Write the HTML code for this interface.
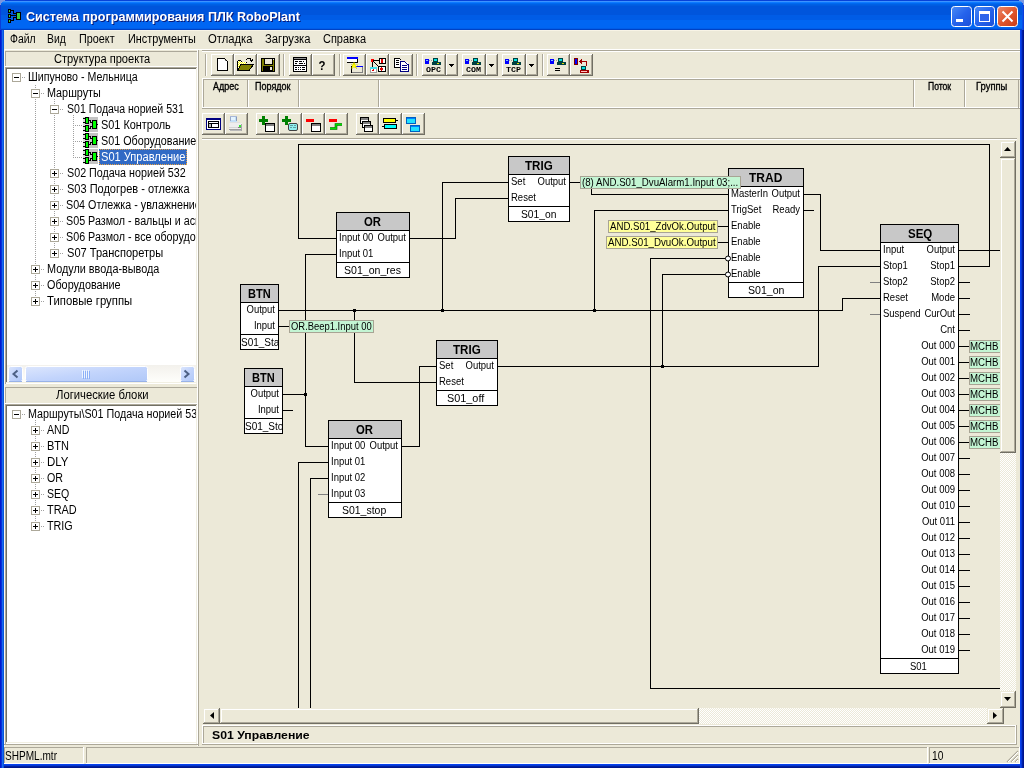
<!DOCTYPE html>
<html><head><meta charset="utf-8"><style>
html,body{margin:0;padding:0;}
body{width:1024px;height:768px;overflow:hidden;background:#ECE9D8;position:relative;font-family:"Liberation Sans",sans-serif;}
div{position:absolute;box-sizing:border-box;}
svg{position:absolute;left:0;top:0;will-change:transform;}
svg text{font-family:"Liberation Sans",sans-serif;}
</style></head><body>

<svg width="1024" height="768" viewBox="0 0 1024 768" shape-rendering="crispEdges">
<rect x="0" y="0" width="1024" height="1" fill="#0842D8"/>
<rect x="0" y="1" width="1024" height="1" fill="#3C93FF"/>
<rect x="0" y="2" width="1024" height="1" fill="#0D79FF"/>
<rect x="0" y="3" width="1024" height="1" fill="#0069F0"/>
<rect x="0" y="4" width="1024" height="1" fill="#0060E5"/>
<rect x="0" y="5" width="1024" height="1" fill="#005CE0"/>
<rect x="0" y="6" width="1024" height="1" fill="#0055DC"/>
<rect x="0" y="7" width="1024" height="1" fill="#0055DC"/>
<rect x="0" y="8" width="1024" height="1" fill="#0055DC"/>
<rect x="0" y="9" width="1024" height="1" fill="#0055DC"/>
<rect x="0" y="10" width="1024" height="1" fill="#0055DC"/>
<rect x="0" y="11" width="1024" height="1" fill="#0055DC"/>
<rect x="0" y="12" width="1024" height="1" fill="#0055DC"/>
<rect x="0" y="13" width="1024" height="1" fill="#0055DC"/>
<rect x="0" y="14" width="1024" height="1" fill="#0055DC"/>
<rect x="0" y="15" width="1024" height="1" fill="#005CE6"/>
<rect x="0" y="16" width="1024" height="1" fill="#005CE6"/>
<rect x="0" y="17" width="1024" height="1" fill="#005CE6"/>
<rect x="0" y="18" width="1024" height="1" fill="#005CE6"/>
<rect x="0" y="19" width="1024" height="1" fill="#005CE6"/>
<rect x="0" y="20" width="1024" height="1" fill="#0066F3"/>
<rect x="0" y="21" width="1024" height="1" fill="#0066F3"/>
<rect x="0" y="22" width="1024" height="1" fill="#0066F3"/>
<rect x="0" y="23" width="1024" height="1" fill="#0066F3"/>
<rect x="0" y="24" width="1024" height="1" fill="#0066F3"/>
<rect x="0" y="25" width="1024" height="1" fill="#0066F3"/>
<rect x="0" y="26" width="1024" height="1" fill="#0066F3"/>
<rect x="0" y="27" width="1024" height="1" fill="#0066F3"/>
<rect x="0" y="28" width="1024" height="1" fill="#005DE8"/>
<rect x="0" y="29" width="1024" height="1" fill="#0042C4"/>
<rect x="0" y="5" width="1" height="25" fill="#0A3ED8"/>
<rect x="1023" y="5" width="1" height="25" fill="#0A3ED8"/>
<rect x="1022" y="3" width="1" height="27" fill="#0750E8"/>
<rect x="0" y="0" width="1" height="1" fill="#7A96DF"/>
<rect x="1023" y="0" width="1" height="1" fill="#7A96DF"/>
<rect x="1" y="0" width="1" height="1" fill="#7A96DF"/>
<rect x="1022" y="0" width="1" height="1" fill="#7A96DF"/>
<rect x="2" y="0" width="1" height="1" fill="#7A96DF"/>
<rect x="1021" y="0" width="1" height="1" fill="#7A96DF"/>
<rect x="3" y="0" width="1" height="1" fill="#7A96DF"/>
<rect x="1020" y="0" width="1" height="1" fill="#7A96DF"/>
<rect x="4" y="0" width="1" height="1" fill="#7A96DF"/>
<rect x="1019" y="0" width="1" height="1" fill="#7A96DF"/>
<rect x="0" y="1" width="1" height="1" fill="#7A96DF"/>
<rect x="1023" y="1" width="1" height="1" fill="#7A96DF"/>
<rect x="1" y="1" width="1" height="1" fill="#7A96DF"/>
<rect x="1022" y="1" width="1" height="1" fill="#7A96DF"/>
<rect x="2" y="1" width="1" height="1" fill="#7A96DF"/>
<rect x="1021" y="1" width="1" height="1" fill="#7A96DF"/>
<rect x="0" y="2" width="1" height="1" fill="#7A96DF"/>
<rect x="1023" y="2" width="1" height="1" fill="#7A96DF"/>
<rect x="1" y="2" width="1" height="1" fill="#7A96DF"/>
<rect x="1022" y="2" width="1" height="1" fill="#7A96DF"/>
<rect x="0" y="3" width="1" height="1" fill="#7A96DF"/>
<rect x="1023" y="3" width="1" height="1" fill="#7A96DF"/>
<rect x="0" y="4" width="1" height="1" fill="#7A96DF"/>
<rect x="1023" y="4" width="1" height="1" fill="#7A96DF"/>
<rect x="0" y="30" width="1" height="738" fill="#0019CF"/>
<rect x="1" y="30" width="1" height="738" fill="#0831D9"/>
<rect x="2" y="30" width="1" height="738" fill="#166AEE"/>
<rect x="3" y="30" width="1" height="738" fill="#0855DD"/>
<rect x="1020" y="30" width="1" height="738" fill="#0842EE"/>
<rect x="1021" y="30" width="1" height="738" fill="#0536D6"/>
<rect x="1022" y="30" width="1" height="738" fill="#001EA6"/>
<rect x="1023" y="30" width="1" height="738" fill="#00148A"/>
<rect x="4" y="764" width="1016" height="1" fill="#0842EE"/>
<rect x="4" y="765" width="1016" height="1" fill="#0538D2"/>
<rect x="4" y="766" width="1016" height="1" fill="#0020A2"/>
<rect x="4" y="767" width="1016" height="1" fill="#00168A"/>
<rect x="8" y="9" width="3" height="4" fill="#000"/><rect x="9" y="10" width="1" height="2" fill="#3CC83C"/><rect x="8" y="14" width="3" height="4" fill="#000"/><rect x="9" y="15" width="1" height="2" fill="#3CC83C"/><rect x="8" y="19" width="3" height="4" fill="#000"/><rect x="9" y="20" width="1" height="2" fill="#3CC83C"/><rect x="16" y="12" width="5" height="8" fill="#000"/><rect x="17" y="13" width="3" height="6" fill="#40D040"/><rect x="11" y="10" width="3" height="1" fill="#000"/><rect x="13" y="10" width="1" height="4" fill="#000"/><rect x="13" y="13" width="3" height="1" fill="#000"/><rect x="11" y="15" width="5" height="1" fill="#000"/><rect x="11" y="20" width="3" height="1" fill="#000"/><rect x="13" y="17" width="1" height="4" fill="#000"/><rect x="13" y="17" width="3" height="1" fill="#000"/>
<text x="27" y="22" font-size="13" font-weight="bold" fill="#0A1874" textLength="274" lengthAdjust="spacingAndGlyphs">Система программирования ПЛК RoboPlant</text>
<text x="26" y="21" font-size="13" font-weight="bold" fill="#fff" textLength="274" lengthAdjust="spacingAndGlyphs">Система программирования ПЛК RoboPlant</text>
<defs>
<linearGradient id="gbtn" x1="0" y1="0" x2="1" y2="1"><stop offset="0" stop-color="#4B8BF6"/><stop offset="0.5" stop-color="#2563EC"/><stop offset="1" stop-color="#1B4FD8"/></linearGradient>
<linearGradient id="gclose" x1="0" y1="0" x2="1" y2="1"><stop offset="0" stop-color="#EA8A6C"/><stop offset="0.5" stop-color="#E1582F"/><stop offset="1" stop-color="#C73A15"/></linearGradient>
</defs>
<rect x="951.5" y="6.5" width="20" height="20" rx="3" ry="3" fill="url(#gbtn)" stroke="#fff" stroke-width="1" shape-rendering="geometricPrecision"/>
<rect x="956" y="19" width="7" height="3" fill="#fff"/>
<rect x="974.5" y="6.5" width="20" height="20" rx="3" ry="3" fill="url(#gbtn)" stroke="#fff" stroke-width="1" shape-rendering="geometricPrecision"/>
<rect x="979" y="11" width="11" height="11" fill="#fff"/><rect x="980" y="14" width="9" height="7" fill="#2E64EA"/>
<rect x="997.5" y="6.5" width="20" height="20" rx="3" ry="3" fill="url(#gclose)" stroke="#fff" stroke-width="1" shape-rendering="geometricPrecision"/>
<path d="M1002.5 11.5 L1012.5 21.5 M1012.5 11.5 L1002.5 21.5" stroke="#fff" stroke-width="2" shape-rendering="geometricPrecision"/>
<rect x="4" y="30" width="1016" height="1" fill="#F8F4E6"/>
<text x="10.0" y="43" font-size="12" fill="#000" textLength="25.57" lengthAdjust="spacingAndGlyphs">Файл</text>
<text x="47.0" y="43" font-size="12" fill="#000" textLength="18.74" lengthAdjust="spacingAndGlyphs">Вид</text>
<text x="79.0" y="43" font-size="12" fill="#000" textLength="35.58" lengthAdjust="spacingAndGlyphs">Проект</text>
<text x="128.0" y="43" font-size="12" fill="#000" textLength="67.83" lengthAdjust="spacingAndGlyphs">Инструменты</text>
<text x="208.0" y="43" font-size="12" fill="#000" textLength="44.46" lengthAdjust="spacingAndGlyphs">Отладка</text>
<text x="265.0" y="43" font-size="12" fill="#000" textLength="45.55" lengthAdjust="spacingAndGlyphs">Загрузка</text>
<text x="323.0" y="43" font-size="12" fill="#000" textLength="43.07" lengthAdjust="spacingAndGlyphs">Справка</text>
<rect x="4" y="49" width="1016" height="1" fill="#fff"/>
<rect x="4" y="49" width="1" height="715" fill="#FBF8EE"/>
<rect x="197" y="49" width="1" height="697" fill="#fff"/>
<rect x="198" y="50" width="1" height="696" fill="#ACA899"/>
<rect x="5" y="51" width="192" height="16" fill="#ECE9D8" stroke="none" stroke-width="1"/>
<rect x="5" y="51" width="192" height="1" fill="#ACA899"/>
<rect x="5" y="51" width="1" height="15" fill="#ACA899"/>
<rect x="5" y="66" width="192" height="1" fill="#fff"/>
<text x="54.0" y="63" font-size="12" fill="#000" textLength="96.26" lengthAdjust="spacingAndGlyphs">Структура проекта</text>
<rect x="5" y="67" width="192" height="317" fill="#fff" stroke="none" stroke-width="1"/>
<rect x="5" y="67" width="192" height="1" fill="#ACA899"/>
<rect x="5" y="67" width="1" height="317" fill="#ACA899"/>
<rect x="6" y="68" width="190" height="1" fill="#716F64"/>
<rect x="6" y="68" width="1" height="315" fill="#716F64"/>
<rect x="6" y="382" width="191" height="1" fill="#F1EFE2"/>
<rect x="196" y="68" width="1" height="316" fill="#F1EFE2"/>
<rect x="5" y="387" width="192" height="17" fill="#ECE9D8" stroke="none" stroke-width="1"/>
<rect x="5" y="387" width="192" height="1" fill="#ACA899"/>
<rect x="5" y="387" width="1" height="16" fill="#ACA899"/>
<rect x="5" y="403" width="192" height="1" fill="#fff"/>
<text x="56.0" y="399" font-size="12" fill="#000" textLength="92.63" lengthAdjust="spacingAndGlyphs">Логические блоки</text>
<rect x="5" y="404" width="192" height="340" fill="#fff" stroke="none" stroke-width="1"/>
<rect x="5" y="404" width="192" height="1" fill="#ACA899"/>
<rect x="5" y="404" width="1" height="340" fill="#ACA899"/>
<rect x="6" y="405" width="190" height="1" fill="#716F64"/>
<rect x="6" y="405" width="1" height="338" fill="#716F64"/>
<rect x="6" y="742" width="191" height="1" fill="#F1EFE2"/>
<rect x="196" y="405" width="1" height="339" fill="#F1EFE2"/>
<rect x="4" y="744" width="194" height="1" fill="#ACA899"/>
<defs><linearGradient id="gtb" x1="0" y1="0" x2="1" y2="1"><stop offset="0" stop-color="#fff"/><stop offset="1" stop-color="#D8D4C4"/></linearGradient></defs>
<defs><clipPath id="clipT1"><rect x="7" y="69" width="189" height="296"/></clipPath><clipPath id="clipT2"><rect x="7" y="406" width="189" height="337"/></clipPath></defs>
<rect x="35" y="85" width="1" height="1" fill="#A0A0A0"/>
<rect x="35" y="87" width="1" height="1" fill="#A0A0A0"/>
<rect x="35" y="89" width="1" height="1" fill="#A0A0A0"/>
<rect x="35" y="91" width="1" height="1" fill="#A0A0A0"/>
<rect x="35" y="93" width="1" height="1" fill="#A0A0A0"/>
<rect x="35" y="95" width="1" height="1" fill="#A0A0A0"/>
<rect x="35" y="97" width="1" height="1" fill="#A0A0A0"/>
<rect x="35" y="99" width="1" height="1" fill="#A0A0A0"/>
<rect x="35" y="101" width="1" height="1" fill="#A0A0A0"/>
<rect x="35" y="103" width="1" height="1" fill="#A0A0A0"/>
<rect x="35" y="105" width="1" height="1" fill="#A0A0A0"/>
<rect x="35" y="107" width="1" height="1" fill="#A0A0A0"/>
<rect x="35" y="109" width="1" height="1" fill="#A0A0A0"/>
<rect x="35" y="111" width="1" height="1" fill="#A0A0A0"/>
<rect x="35" y="113" width="1" height="1" fill="#A0A0A0"/>
<rect x="35" y="115" width="1" height="1" fill="#A0A0A0"/>
<rect x="35" y="117" width="1" height="1" fill="#A0A0A0"/>
<rect x="35" y="119" width="1" height="1" fill="#A0A0A0"/>
<rect x="35" y="121" width="1" height="1" fill="#A0A0A0"/>
<rect x="35" y="123" width="1" height="1" fill="#A0A0A0"/>
<rect x="35" y="125" width="1" height="1" fill="#A0A0A0"/>
<rect x="35" y="127" width="1" height="1" fill="#A0A0A0"/>
<rect x="35" y="129" width="1" height="1" fill="#A0A0A0"/>
<rect x="35" y="131" width="1" height="1" fill="#A0A0A0"/>
<rect x="35" y="133" width="1" height="1" fill="#A0A0A0"/>
<rect x="35" y="135" width="1" height="1" fill="#A0A0A0"/>
<rect x="35" y="137" width="1" height="1" fill="#A0A0A0"/>
<rect x="35" y="139" width="1" height="1" fill="#A0A0A0"/>
<rect x="35" y="141" width="1" height="1" fill="#A0A0A0"/>
<rect x="35" y="143" width="1" height="1" fill="#A0A0A0"/>
<rect x="35" y="145" width="1" height="1" fill="#A0A0A0"/>
<rect x="35" y="147" width="1" height="1" fill="#A0A0A0"/>
<rect x="35" y="149" width="1" height="1" fill="#A0A0A0"/>
<rect x="35" y="151" width="1" height="1" fill="#A0A0A0"/>
<rect x="35" y="153" width="1" height="1" fill="#A0A0A0"/>
<rect x="35" y="155" width="1" height="1" fill="#A0A0A0"/>
<rect x="35" y="157" width="1" height="1" fill="#A0A0A0"/>
<rect x="35" y="159" width="1" height="1" fill="#A0A0A0"/>
<rect x="35" y="161" width="1" height="1" fill="#A0A0A0"/>
<rect x="35" y="163" width="1" height="1" fill="#A0A0A0"/>
<rect x="35" y="165" width="1" height="1" fill="#A0A0A0"/>
<rect x="35" y="167" width="1" height="1" fill="#A0A0A0"/>
<rect x="35" y="169" width="1" height="1" fill="#A0A0A0"/>
<rect x="35" y="171" width="1" height="1" fill="#A0A0A0"/>
<rect x="35" y="173" width="1" height="1" fill="#A0A0A0"/>
<rect x="35" y="175" width="1" height="1" fill="#A0A0A0"/>
<rect x="35" y="177" width="1" height="1" fill="#A0A0A0"/>
<rect x="35" y="179" width="1" height="1" fill="#A0A0A0"/>
<rect x="35" y="181" width="1" height="1" fill="#A0A0A0"/>
<rect x="35" y="183" width="1" height="1" fill="#A0A0A0"/>
<rect x="35" y="185" width="1" height="1" fill="#A0A0A0"/>
<rect x="35" y="187" width="1" height="1" fill="#A0A0A0"/>
<rect x="35" y="189" width="1" height="1" fill="#A0A0A0"/>
<rect x="35" y="191" width="1" height="1" fill="#A0A0A0"/>
<rect x="35" y="193" width="1" height="1" fill="#A0A0A0"/>
<rect x="35" y="195" width="1" height="1" fill="#A0A0A0"/>
<rect x="35" y="197" width="1" height="1" fill="#A0A0A0"/>
<rect x="35" y="199" width="1" height="1" fill="#A0A0A0"/>
<rect x="35" y="201" width="1" height="1" fill="#A0A0A0"/>
<rect x="35" y="203" width="1" height="1" fill="#A0A0A0"/>
<rect x="35" y="205" width="1" height="1" fill="#A0A0A0"/>
<rect x="35" y="207" width="1" height="1" fill="#A0A0A0"/>
<rect x="35" y="209" width="1" height="1" fill="#A0A0A0"/>
<rect x="35" y="211" width="1" height="1" fill="#A0A0A0"/>
<rect x="35" y="213" width="1" height="1" fill="#A0A0A0"/>
<rect x="35" y="215" width="1" height="1" fill="#A0A0A0"/>
<rect x="35" y="217" width="1" height="1" fill="#A0A0A0"/>
<rect x="35" y="219" width="1" height="1" fill="#A0A0A0"/>
<rect x="35" y="221" width="1" height="1" fill="#A0A0A0"/>
<rect x="35" y="223" width="1" height="1" fill="#A0A0A0"/>
<rect x="35" y="225" width="1" height="1" fill="#A0A0A0"/>
<rect x="35" y="227" width="1" height="1" fill="#A0A0A0"/>
<rect x="35" y="229" width="1" height="1" fill="#A0A0A0"/>
<rect x="35" y="231" width="1" height="1" fill="#A0A0A0"/>
<rect x="35" y="233" width="1" height="1" fill="#A0A0A0"/>
<rect x="35" y="235" width="1" height="1" fill="#A0A0A0"/>
<rect x="35" y="237" width="1" height="1" fill="#A0A0A0"/>
<rect x="35" y="239" width="1" height="1" fill="#A0A0A0"/>
<rect x="35" y="241" width="1" height="1" fill="#A0A0A0"/>
<rect x="35" y="243" width="1" height="1" fill="#A0A0A0"/>
<rect x="35" y="245" width="1" height="1" fill="#A0A0A0"/>
<rect x="35" y="247" width="1" height="1" fill="#A0A0A0"/>
<rect x="35" y="249" width="1" height="1" fill="#A0A0A0"/>
<rect x="35" y="251" width="1" height="1" fill="#A0A0A0"/>
<rect x="35" y="253" width="1" height="1" fill="#A0A0A0"/>
<rect x="35" y="255" width="1" height="1" fill="#A0A0A0"/>
<rect x="35" y="257" width="1" height="1" fill="#A0A0A0"/>
<rect x="35" y="259" width="1" height="1" fill="#A0A0A0"/>
<rect x="35" y="261" width="1" height="1" fill="#A0A0A0"/>
<rect x="35" y="263" width="1" height="1" fill="#A0A0A0"/>
<rect x="35" y="265" width="1" height="1" fill="#A0A0A0"/>
<rect x="35" y="267" width="1" height="1" fill="#A0A0A0"/>
<rect x="35" y="269" width="1" height="1" fill="#A0A0A0"/>
<rect x="35" y="271" width="1" height="1" fill="#A0A0A0"/>
<rect x="35" y="273" width="1" height="1" fill="#A0A0A0"/>
<rect x="35" y="275" width="1" height="1" fill="#A0A0A0"/>
<rect x="35" y="277" width="1" height="1" fill="#A0A0A0"/>
<rect x="35" y="279" width="1" height="1" fill="#A0A0A0"/>
<rect x="35" y="281" width="1" height="1" fill="#A0A0A0"/>
<rect x="35" y="283" width="1" height="1" fill="#A0A0A0"/>
<rect x="35" y="285" width="1" height="1" fill="#A0A0A0"/>
<rect x="35" y="287" width="1" height="1" fill="#A0A0A0"/>
<rect x="35" y="289" width="1" height="1" fill="#A0A0A0"/>
<rect x="35" y="291" width="1" height="1" fill="#A0A0A0"/>
<rect x="35" y="293" width="1" height="1" fill="#A0A0A0"/>
<rect x="35" y="295" width="1" height="1" fill="#A0A0A0"/>
<rect x="35" y="297" width="1" height="1" fill="#A0A0A0"/>
<rect x="35" y="299" width="1" height="1" fill="#A0A0A0"/>
<rect x="35" y="301" width="1" height="1" fill="#A0A0A0"/>
<rect x="54" y="99" width="1" height="1" fill="#A0A0A0"/>
<rect x="54" y="101" width="1" height="1" fill="#A0A0A0"/>
<rect x="54" y="103" width="1" height="1" fill="#A0A0A0"/>
<rect x="54" y="105" width="1" height="1" fill="#A0A0A0"/>
<rect x="54" y="107" width="1" height="1" fill="#A0A0A0"/>
<rect x="54" y="109" width="1" height="1" fill="#A0A0A0"/>
<rect x="54" y="111" width="1" height="1" fill="#A0A0A0"/>
<rect x="54" y="113" width="1" height="1" fill="#A0A0A0"/>
<rect x="54" y="115" width="1" height="1" fill="#A0A0A0"/>
<rect x="54" y="117" width="1" height="1" fill="#A0A0A0"/>
<rect x="54" y="119" width="1" height="1" fill="#A0A0A0"/>
<rect x="54" y="121" width="1" height="1" fill="#A0A0A0"/>
<rect x="54" y="123" width="1" height="1" fill="#A0A0A0"/>
<rect x="54" y="125" width="1" height="1" fill="#A0A0A0"/>
<rect x="54" y="127" width="1" height="1" fill="#A0A0A0"/>
<rect x="54" y="129" width="1" height="1" fill="#A0A0A0"/>
<rect x="54" y="131" width="1" height="1" fill="#A0A0A0"/>
<rect x="54" y="133" width="1" height="1" fill="#A0A0A0"/>
<rect x="54" y="135" width="1" height="1" fill="#A0A0A0"/>
<rect x="54" y="137" width="1" height="1" fill="#A0A0A0"/>
<rect x="54" y="139" width="1" height="1" fill="#A0A0A0"/>
<rect x="54" y="141" width="1" height="1" fill="#A0A0A0"/>
<rect x="54" y="143" width="1" height="1" fill="#A0A0A0"/>
<rect x="54" y="145" width="1" height="1" fill="#A0A0A0"/>
<rect x="54" y="147" width="1" height="1" fill="#A0A0A0"/>
<rect x="54" y="149" width="1" height="1" fill="#A0A0A0"/>
<rect x="54" y="151" width="1" height="1" fill="#A0A0A0"/>
<rect x="54" y="153" width="1" height="1" fill="#A0A0A0"/>
<rect x="54" y="155" width="1" height="1" fill="#A0A0A0"/>
<rect x="54" y="157" width="1" height="1" fill="#A0A0A0"/>
<rect x="54" y="159" width="1" height="1" fill="#A0A0A0"/>
<rect x="54" y="161" width="1" height="1" fill="#A0A0A0"/>
<rect x="54" y="163" width="1" height="1" fill="#A0A0A0"/>
<rect x="54" y="165" width="1" height="1" fill="#A0A0A0"/>
<rect x="54" y="167" width="1" height="1" fill="#A0A0A0"/>
<rect x="54" y="169" width="1" height="1" fill="#A0A0A0"/>
<rect x="54" y="171" width="1" height="1" fill="#A0A0A0"/>
<rect x="54" y="173" width="1" height="1" fill="#A0A0A0"/>
<rect x="54" y="175" width="1" height="1" fill="#A0A0A0"/>
<rect x="54" y="177" width="1" height="1" fill="#A0A0A0"/>
<rect x="54" y="179" width="1" height="1" fill="#A0A0A0"/>
<rect x="54" y="181" width="1" height="1" fill="#A0A0A0"/>
<rect x="54" y="183" width="1" height="1" fill="#A0A0A0"/>
<rect x="54" y="185" width="1" height="1" fill="#A0A0A0"/>
<rect x="54" y="187" width="1" height="1" fill="#A0A0A0"/>
<rect x="54" y="189" width="1" height="1" fill="#A0A0A0"/>
<rect x="54" y="191" width="1" height="1" fill="#A0A0A0"/>
<rect x="54" y="193" width="1" height="1" fill="#A0A0A0"/>
<rect x="54" y="195" width="1" height="1" fill="#A0A0A0"/>
<rect x="54" y="197" width="1" height="1" fill="#A0A0A0"/>
<rect x="54" y="199" width="1" height="1" fill="#A0A0A0"/>
<rect x="54" y="201" width="1" height="1" fill="#A0A0A0"/>
<rect x="54" y="203" width="1" height="1" fill="#A0A0A0"/>
<rect x="54" y="205" width="1" height="1" fill="#A0A0A0"/>
<rect x="54" y="207" width="1" height="1" fill="#A0A0A0"/>
<rect x="54" y="209" width="1" height="1" fill="#A0A0A0"/>
<rect x="54" y="211" width="1" height="1" fill="#A0A0A0"/>
<rect x="54" y="213" width="1" height="1" fill="#A0A0A0"/>
<rect x="54" y="215" width="1" height="1" fill="#A0A0A0"/>
<rect x="54" y="217" width="1" height="1" fill="#A0A0A0"/>
<rect x="54" y="219" width="1" height="1" fill="#A0A0A0"/>
<rect x="54" y="221" width="1" height="1" fill="#A0A0A0"/>
<rect x="54" y="223" width="1" height="1" fill="#A0A0A0"/>
<rect x="54" y="225" width="1" height="1" fill="#A0A0A0"/>
<rect x="54" y="227" width="1" height="1" fill="#A0A0A0"/>
<rect x="54" y="229" width="1" height="1" fill="#A0A0A0"/>
<rect x="54" y="231" width="1" height="1" fill="#A0A0A0"/>
<rect x="54" y="233" width="1" height="1" fill="#A0A0A0"/>
<rect x="54" y="235" width="1" height="1" fill="#A0A0A0"/>
<rect x="54" y="237" width="1" height="1" fill="#A0A0A0"/>
<rect x="54" y="239" width="1" height="1" fill="#A0A0A0"/>
<rect x="54" y="241" width="1" height="1" fill="#A0A0A0"/>
<rect x="54" y="243" width="1" height="1" fill="#A0A0A0"/>
<rect x="54" y="245" width="1" height="1" fill="#A0A0A0"/>
<rect x="54" y="247" width="1" height="1" fill="#A0A0A0"/>
<rect x="54" y="249" width="1" height="1" fill="#A0A0A0"/>
<rect x="54" y="251" width="1" height="1" fill="#A0A0A0"/>
<rect x="54" y="253" width="1" height="1" fill="#A0A0A0"/>
<rect x="73" y="115" width="1" height="1" fill="#A0A0A0"/>
<rect x="73" y="117" width="1" height="1" fill="#A0A0A0"/>
<rect x="73" y="119" width="1" height="1" fill="#A0A0A0"/>
<rect x="73" y="121" width="1" height="1" fill="#A0A0A0"/>
<rect x="73" y="123" width="1" height="1" fill="#A0A0A0"/>
<rect x="73" y="125" width="1" height="1" fill="#A0A0A0"/>
<rect x="73" y="127" width="1" height="1" fill="#A0A0A0"/>
<rect x="73" y="129" width="1" height="1" fill="#A0A0A0"/>
<rect x="73" y="131" width="1" height="1" fill="#A0A0A0"/>
<rect x="73" y="133" width="1" height="1" fill="#A0A0A0"/>
<rect x="73" y="135" width="1" height="1" fill="#A0A0A0"/>
<rect x="73" y="137" width="1" height="1" fill="#A0A0A0"/>
<rect x="73" y="139" width="1" height="1" fill="#A0A0A0"/>
<rect x="73" y="141" width="1" height="1" fill="#A0A0A0"/>
<rect x="73" y="143" width="1" height="1" fill="#A0A0A0"/>
<rect x="73" y="145" width="1" height="1" fill="#A0A0A0"/>
<rect x="73" y="147" width="1" height="1" fill="#A0A0A0"/>
<rect x="73" y="149" width="1" height="1" fill="#A0A0A0"/>
<rect x="73" y="151" width="1" height="1" fill="#A0A0A0"/>
<rect x="73" y="153" width="1" height="1" fill="#A0A0A0"/>
<rect x="73" y="155" width="1" height="1" fill="#A0A0A0"/>
<rect x="73" y="157" width="1" height="1" fill="#A0A0A0"/>
<g clip-path="url(#clipT1)">
<rect x="12" y="73" width="9" height="9" fill="#fff"/>
<rect x="12" y="73" width="9" height="1" fill="#ACA899"/>
<rect x="12" y="81" width="9" height="1" fill="#ACA899"/>
<rect x="12" y="73" width="1" height="9" fill="#ACA899"/>
<rect x="20" y="73" width="1" height="9" fill="#ACA899"/>
<rect x="14" y="77" width="5" height="1" fill="#000"/>
<rect x="22" y="77" width="1" height="1" fill="#A0A0A0"/>
<rect x="24" y="77" width="1" height="1" fill="#A0A0A0"/>
<text x="28.0" y="81" font-size="12" fill="#000" textLength="109.65" lengthAdjust="spacingAndGlyphs">Шипуново - Мельница</text>
<rect x="31" y="89" width="9" height="9" fill="#fff"/>
<rect x="31" y="89" width="9" height="1" fill="#ACA899"/>
<rect x="31" y="97" width="9" height="1" fill="#ACA899"/>
<rect x="31" y="89" width="1" height="9" fill="#ACA899"/>
<rect x="39" y="89" width="1" height="9" fill="#ACA899"/>
<rect x="33" y="93" width="5" height="1" fill="#000"/>
<rect x="41" y="93" width="1" height="1" fill="#A0A0A0"/>
<rect x="43" y="93" width="1" height="1" fill="#A0A0A0"/>
<text x="47.0" y="97" font-size="12" fill="#000" textLength="53.79" lengthAdjust="spacingAndGlyphs">Маршруты</text>
<rect x="50" y="105" width="9" height="9" fill="#fff"/>
<rect x="50" y="105" width="9" height="1" fill="#ACA899"/>
<rect x="50" y="113" width="9" height="1" fill="#ACA899"/>
<rect x="50" y="105" width="1" height="9" fill="#ACA899"/>
<rect x="58" y="105" width="1" height="9" fill="#ACA899"/>
<rect x="52" y="109" width="5" height="1" fill="#000"/>
<rect x="60" y="109" width="1" height="1" fill="#A0A0A0"/>
<rect x="62" y="109" width="1" height="1" fill="#A0A0A0"/>
<text x="67.0" y="113" font-size="12" fill="#000" textLength="116.78" lengthAdjust="spacingAndGlyphs">S01 Подача норией 531</text>
<rect x="75" y="125" width="1" height="1" fill="#A0A0A0"/>
<rect x="77" y="125" width="1" height="1" fill="#A0A0A0"/>
<rect x="79" y="125" width="1" height="1" fill="#A0A0A0"/>
<rect x="81" y="125" width="1" height="1" fill="#A0A0A0"/>
<rect x="83" y="117" width="15" height="15" fill="#C4C4C4"/><rect x="83" y="117" width="5" height="15" fill="#DCDCDC"/><rect x="85" y="117" width="4" height="7" fill="#000"/><rect x="86" y="118" width="2" height="5" fill="#00FF00"/><rect x="85" y="125" width="4" height="7" fill="#000"/><rect x="86" y="126" width="2" height="5" fill="#00FF00"/><rect x="92" y="120" width="5" height="9" fill="#000"/><rect x="93" y="121" width="3" height="7" fill="#00FF00"/><rect x="83" y="118" width="2" height="1" fill="#000"/><rect x="83" y="122" width="2" height="1" fill="#000"/><rect x="83" y="126" width="2" height="1" fill="#000"/><rect x="83" y="130" width="2" height="1" fill="#000"/><rect x="89" y="120" width="2" height="1" fill="#000"/><rect x="90" y="120" width="1" height="3" fill="#000"/><rect x="90" y="122" width="2" height="1" fill="#000"/><rect x="89" y="128" width="2" height="1" fill="#000"/><rect x="90" y="126" width="1" height="3" fill="#000"/><rect x="90" y="126" width="2" height="1" fill="#000"/><rect x="97" y="124" width="1" height="1" fill="#000"/>
<text x="101.0" y="129" font-size="12" fill="#000" textLength="69.8" lengthAdjust="spacingAndGlyphs">S01 Контроль</text>
<rect x="75" y="141" width="1" height="1" fill="#A0A0A0"/>
<rect x="77" y="141" width="1" height="1" fill="#A0A0A0"/>
<rect x="79" y="141" width="1" height="1" fill="#A0A0A0"/>
<rect x="81" y="141" width="1" height="1" fill="#A0A0A0"/>
<rect x="83" y="133" width="15" height="15" fill="#C4C4C4"/><rect x="83" y="133" width="5" height="15" fill="#DCDCDC"/><rect x="85" y="133" width="4" height="7" fill="#000"/><rect x="86" y="134" width="2" height="5" fill="#00FF00"/><rect x="85" y="141" width="4" height="7" fill="#000"/><rect x="86" y="142" width="2" height="5" fill="#00FF00"/><rect x="92" y="136" width="5" height="9" fill="#000"/><rect x="93" y="137" width="3" height="7" fill="#00FF00"/><rect x="83" y="134" width="2" height="1" fill="#000"/><rect x="83" y="138" width="2" height="1" fill="#000"/><rect x="83" y="142" width="2" height="1" fill="#000"/><rect x="83" y="146" width="2" height="1" fill="#000"/><rect x="89" y="136" width="2" height="1" fill="#000"/><rect x="90" y="136" width="1" height="3" fill="#000"/><rect x="90" y="138" width="2" height="1" fill="#000"/><rect x="89" y="144" width="2" height="1" fill="#000"/><rect x="90" y="142" width="1" height="3" fill="#000"/><rect x="90" y="142" width="2" height="1" fill="#000"/><rect x="97" y="140" width="1" height="1" fill="#000"/>
<text x="101.0" y="145" font-size="12" fill="#000" textLength="95.34" lengthAdjust="spacingAndGlyphs">S01 Оборудование</text>
<rect x="75" y="157" width="1" height="1" fill="#A0A0A0"/>
<rect x="77" y="157" width="1" height="1" fill="#A0A0A0"/>
<rect x="79" y="157" width="1" height="1" fill="#A0A0A0"/>
<rect x="81" y="157" width="1" height="1" fill="#A0A0A0"/>
<rect x="83" y="149" width="15" height="15" fill="#C4C4C4"/><rect x="83" y="149" width="5" height="15" fill="#DCDCDC"/><rect x="85" y="149" width="4" height="7" fill="#000"/><rect x="86" y="150" width="2" height="5" fill="#00FF00"/><rect x="85" y="157" width="4" height="7" fill="#000"/><rect x="86" y="158" width="2" height="5" fill="#00FF00"/><rect x="92" y="152" width="5" height="9" fill="#000"/><rect x="93" y="153" width="3" height="7" fill="#00FF00"/><rect x="83" y="150" width="2" height="1" fill="#000"/><rect x="83" y="154" width="2" height="1" fill="#000"/><rect x="83" y="158" width="2" height="1" fill="#000"/><rect x="83" y="162" width="2" height="1" fill="#000"/><rect x="89" y="152" width="2" height="1" fill="#000"/><rect x="90" y="152" width="1" height="3" fill="#000"/><rect x="90" y="154" width="2" height="1" fill="#000"/><rect x="89" y="160" width="2" height="1" fill="#000"/><rect x="90" y="158" width="1" height="3" fill="#000"/><rect x="90" y="158" width="2" height="1" fill="#000"/><rect x="97" y="156" width="1" height="1" fill="#000"/>
<rect x="99" y="149" width="88" height="16" fill="#316AC5"/><rect x="99.5" y="149.5" width="87" height="15" fill="none" stroke="#E8A040" stroke-width="1" stroke-dasharray="1 1" shape-rendering="crispEdges"/>
<text x="101.0" y="161" font-size="12" fill="#fff" textLength="84.42" lengthAdjust="spacingAndGlyphs">S01 Управление</text>
<rect x="50" y="169" width="9" height="9" fill="#fff"/>
<rect x="50" y="169" width="9" height="1" fill="#ACA899"/>
<rect x="50" y="177" width="9" height="1" fill="#ACA899"/>
<rect x="50" y="169" width="1" height="9" fill="#ACA899"/>
<rect x="58" y="169" width="1" height="9" fill="#ACA899"/>
<rect x="52" y="173" width="5" height="1" fill="#000"/>
<rect x="54" y="171" width="1" height="5" fill="#000"/>
<rect x="60" y="173" width="1" height="1" fill="#A0A0A0"/>
<rect x="62" y="173" width="1" height="1" fill="#A0A0A0"/>
<text x="67.0" y="177" font-size="12" fill="#000" textLength="118.78" lengthAdjust="spacingAndGlyphs">S02 Подача норией 532</text>
<rect x="50" y="185" width="9" height="9" fill="#fff"/>
<rect x="50" y="185" width="9" height="1" fill="#ACA899"/>
<rect x="50" y="193" width="9" height="1" fill="#ACA899"/>
<rect x="50" y="185" width="1" height="9" fill="#ACA899"/>
<rect x="58" y="185" width="1" height="9" fill="#ACA899"/>
<rect x="52" y="189" width="5" height="1" fill="#000"/>
<rect x="54" y="187" width="1" height="5" fill="#000"/>
<rect x="60" y="189" width="1" height="1" fill="#A0A0A0"/>
<rect x="62" y="189" width="1" height="1" fill="#A0A0A0"/>
<text x="67.0" y="193" font-size="12" fill="#000" textLength="122.56" lengthAdjust="spacingAndGlyphs">S03 Подогрев - отлежка</text>
<rect x="50" y="201" width="9" height="9" fill="#fff"/>
<rect x="50" y="201" width="9" height="1" fill="#ACA899"/>
<rect x="50" y="209" width="9" height="1" fill="#ACA899"/>
<rect x="50" y="201" width="1" height="9" fill="#ACA899"/>
<rect x="58" y="201" width="1" height="9" fill="#ACA899"/>
<rect x="52" y="205" width="5" height="1" fill="#000"/>
<rect x="54" y="203" width="1" height="5" fill="#000"/>
<rect x="60" y="205" width="1" height="1" fill="#A0A0A0"/>
<rect x="62" y="205" width="1" height="1" fill="#A0A0A0"/>
<text x="66" y="209" font-size="12" fill="#000" textLength="134.8" lengthAdjust="spacingAndGlyphs">S04 Отлежка - увлажнение</text>
<rect x="50" y="217" width="9" height="9" fill="#fff"/>
<rect x="50" y="217" width="9" height="1" fill="#ACA899"/>
<rect x="50" y="225" width="9" height="1" fill="#ACA899"/>
<rect x="50" y="217" width="1" height="9" fill="#ACA899"/>
<rect x="58" y="217" width="1" height="9" fill="#ACA899"/>
<rect x="52" y="221" width="5" height="1" fill="#000"/>
<rect x="54" y="219" width="1" height="5" fill="#000"/>
<rect x="60" y="221" width="1" height="1" fill="#A0A0A0"/>
<rect x="62" y="221" width="1" height="1" fill="#A0A0A0"/>
<text x="66" y="225" font-size="12" fill="#000" textLength="170.8" lengthAdjust="spacingAndGlyphs">S05 Размол - вальцы и аспирация</text>
<rect x="50" y="233" width="9" height="9" fill="#fff"/>
<rect x="50" y="233" width="9" height="1" fill="#ACA899"/>
<rect x="50" y="241" width="9" height="1" fill="#ACA899"/>
<rect x="50" y="233" width="1" height="9" fill="#ACA899"/>
<rect x="58" y="233" width="1" height="9" fill="#ACA899"/>
<rect x="52" y="237" width="5" height="1" fill="#000"/>
<rect x="54" y="235" width="1" height="5" fill="#000"/>
<rect x="60" y="237" width="1" height="1" fill="#A0A0A0"/>
<rect x="62" y="237" width="1" height="1" fill="#A0A0A0"/>
<text x="66" y="241" font-size="12" fill="#000" textLength="159.1" lengthAdjust="spacingAndGlyphs">S06 Размол - все оборудование</text>
<rect x="50" y="249" width="9" height="9" fill="#fff"/>
<rect x="50" y="249" width="9" height="1" fill="#ACA899"/>
<rect x="50" y="257" width="9" height="1" fill="#ACA899"/>
<rect x="50" y="249" width="1" height="9" fill="#ACA899"/>
<rect x="58" y="249" width="1" height="9" fill="#ACA899"/>
<rect x="52" y="253" width="5" height="1" fill="#000"/>
<rect x="54" y="251" width="1" height="5" fill="#000"/>
<rect x="60" y="253" width="1" height="1" fill="#A0A0A0"/>
<rect x="62" y="253" width="1" height="1" fill="#A0A0A0"/>
<text x="67.0" y="257" font-size="12" fill="#000" textLength="96.2" lengthAdjust="spacingAndGlyphs">S07 Транспоретры</text>
<rect x="31" y="265" width="9" height="9" fill="#fff"/>
<rect x="31" y="265" width="9" height="1" fill="#ACA899"/>
<rect x="31" y="273" width="9" height="1" fill="#ACA899"/>
<rect x="31" y="265" width="1" height="9" fill="#ACA899"/>
<rect x="39" y="265" width="1" height="9" fill="#ACA899"/>
<rect x="33" y="269" width="5" height="1" fill="#000"/>
<rect x="35" y="267" width="1" height="5" fill="#000"/>
<rect x="41" y="269" width="1" height="1" fill="#A0A0A0"/>
<rect x="43" y="269" width="1" height="1" fill="#A0A0A0"/>
<text x="47.0" y="273" font-size="12" fill="#000" textLength="112.38" lengthAdjust="spacingAndGlyphs">Модули ввода-вывода</text>
<rect x="31" y="281" width="9" height="9" fill="#fff"/>
<rect x="31" y="281" width="9" height="1" fill="#ACA899"/>
<rect x="31" y="289" width="9" height="1" fill="#ACA899"/>
<rect x="31" y="281" width="1" height="9" fill="#ACA899"/>
<rect x="39" y="281" width="1" height="9" fill="#ACA899"/>
<rect x="33" y="285" width="5" height="1" fill="#000"/>
<rect x="35" y="283" width="1" height="5" fill="#000"/>
<rect x="41" y="285" width="1" height="1" fill="#A0A0A0"/>
<rect x="43" y="285" width="1" height="1" fill="#A0A0A0"/>
<text x="47.0" y="289" font-size="12" fill="#000" textLength="73.63" lengthAdjust="spacingAndGlyphs">Оборудование</text>
<rect x="31" y="297" width="9" height="9" fill="#fff"/>
<rect x="31" y="297" width="9" height="1" fill="#ACA899"/>
<rect x="31" y="305" width="9" height="1" fill="#ACA899"/>
<rect x="31" y="297" width="1" height="9" fill="#ACA899"/>
<rect x="39" y="297" width="1" height="9" fill="#ACA899"/>
<rect x="33" y="301" width="5" height="1" fill="#000"/>
<rect x="35" y="299" width="1" height="5" fill="#000"/>
<rect x="41" y="301" width="1" height="1" fill="#A0A0A0"/>
<rect x="43" y="301" width="1" height="1" fill="#A0A0A0"/>
<text x="47.0" y="305" font-size="12" fill="#000" textLength="85.19" lengthAdjust="spacingAndGlyphs">Типовые группы</text>
</g>
<rect x="35" y="420" width="1" height="1" fill="#A0A0A0"/>
<rect x="35" y="422" width="1" height="1" fill="#A0A0A0"/>
<rect x="35" y="424" width="1" height="1" fill="#A0A0A0"/>
<rect x="35" y="426" width="1" height="1" fill="#A0A0A0"/>
<rect x="35" y="428" width="1" height="1" fill="#A0A0A0"/>
<rect x="35" y="430" width="1" height="1" fill="#A0A0A0"/>
<rect x="35" y="432" width="1" height="1" fill="#A0A0A0"/>
<rect x="35" y="434" width="1" height="1" fill="#A0A0A0"/>
<rect x="35" y="436" width="1" height="1" fill="#A0A0A0"/>
<rect x="35" y="438" width="1" height="1" fill="#A0A0A0"/>
<rect x="35" y="440" width="1" height="1" fill="#A0A0A0"/>
<rect x="35" y="442" width="1" height="1" fill="#A0A0A0"/>
<rect x="35" y="444" width="1" height="1" fill="#A0A0A0"/>
<rect x="35" y="446" width="1" height="1" fill="#A0A0A0"/>
<rect x="35" y="448" width="1" height="1" fill="#A0A0A0"/>
<rect x="35" y="450" width="1" height="1" fill="#A0A0A0"/>
<rect x="35" y="452" width="1" height="1" fill="#A0A0A0"/>
<rect x="35" y="454" width="1" height="1" fill="#A0A0A0"/>
<rect x="35" y="456" width="1" height="1" fill="#A0A0A0"/>
<rect x="35" y="458" width="1" height="1" fill="#A0A0A0"/>
<rect x="35" y="460" width="1" height="1" fill="#A0A0A0"/>
<rect x="35" y="462" width="1" height="1" fill="#A0A0A0"/>
<rect x="35" y="464" width="1" height="1" fill="#A0A0A0"/>
<rect x="35" y="466" width="1" height="1" fill="#A0A0A0"/>
<rect x="35" y="468" width="1" height="1" fill="#A0A0A0"/>
<rect x="35" y="470" width="1" height="1" fill="#A0A0A0"/>
<rect x="35" y="472" width="1" height="1" fill="#A0A0A0"/>
<rect x="35" y="474" width="1" height="1" fill="#A0A0A0"/>
<rect x="35" y="476" width="1" height="1" fill="#A0A0A0"/>
<rect x="35" y="478" width="1" height="1" fill="#A0A0A0"/>
<rect x="35" y="480" width="1" height="1" fill="#A0A0A0"/>
<rect x="35" y="482" width="1" height="1" fill="#A0A0A0"/>
<rect x="35" y="484" width="1" height="1" fill="#A0A0A0"/>
<rect x="35" y="486" width="1" height="1" fill="#A0A0A0"/>
<rect x="35" y="488" width="1" height="1" fill="#A0A0A0"/>
<rect x="35" y="490" width="1" height="1" fill="#A0A0A0"/>
<rect x="35" y="492" width="1" height="1" fill="#A0A0A0"/>
<rect x="35" y="494" width="1" height="1" fill="#A0A0A0"/>
<rect x="35" y="496" width="1" height="1" fill="#A0A0A0"/>
<rect x="35" y="498" width="1" height="1" fill="#A0A0A0"/>
<rect x="35" y="500" width="1" height="1" fill="#A0A0A0"/>
<rect x="35" y="502" width="1" height="1" fill="#A0A0A0"/>
<rect x="35" y="504" width="1" height="1" fill="#A0A0A0"/>
<rect x="35" y="506" width="1" height="1" fill="#A0A0A0"/>
<rect x="35" y="508" width="1" height="1" fill="#A0A0A0"/>
<rect x="35" y="510" width="1" height="1" fill="#A0A0A0"/>
<rect x="35" y="512" width="1" height="1" fill="#A0A0A0"/>
<rect x="35" y="514" width="1" height="1" fill="#A0A0A0"/>
<rect x="35" y="516" width="1" height="1" fill="#A0A0A0"/>
<rect x="35" y="518" width="1" height="1" fill="#A0A0A0"/>
<rect x="35" y="520" width="1" height="1" fill="#A0A0A0"/>
<rect x="35" y="522" width="1" height="1" fill="#A0A0A0"/>
<rect x="35" y="524" width="1" height="1" fill="#A0A0A0"/>
<rect x="35" y="526" width="1" height="1" fill="#A0A0A0"/>
<g clip-path="url(#clipT2)">
<rect x="12" y="410" width="9" height="9" fill="#fff"/>
<rect x="12" y="410" width="9" height="1" fill="#ACA899"/>
<rect x="12" y="418" width="9" height="1" fill="#ACA899"/>
<rect x="12" y="410" width="1" height="9" fill="#ACA899"/>
<rect x="20" y="410" width="1" height="9" fill="#ACA899"/>
<rect x="14" y="414" width="5" height="1" fill="#000"/>
<rect x="22" y="414" width="1" height="1" fill="#A0A0A0"/>
<rect x="24" y="414" width="1" height="1" fill="#A0A0A0"/>
<text x="28" y="418" font-size="12" fill="#000" textLength="175.2" lengthAdjust="spacingAndGlyphs">Маршруты\S01 Подача норией 531</text>
<rect x="31" y="426" width="9" height="9" fill="#fff"/>
<rect x="31" y="426" width="9" height="1" fill="#ACA899"/>
<rect x="31" y="434" width="9" height="1" fill="#ACA899"/>
<rect x="31" y="426" width="1" height="9" fill="#ACA899"/>
<rect x="39" y="426" width="1" height="9" fill="#ACA899"/>
<rect x="33" y="430" width="5" height="1" fill="#000"/>
<rect x="35" y="428" width="1" height="5" fill="#000"/>
<rect x="41" y="430" width="1" height="1" fill="#A0A0A0"/>
<rect x="43" y="430" width="1" height="1" fill="#A0A0A0"/>
<text x="47.0" y="434" font-size="12" fill="#000" textLength="22.42" lengthAdjust="spacingAndGlyphs">AND</text>
<rect x="31" y="442" width="9" height="9" fill="#fff"/>
<rect x="31" y="442" width="9" height="1" fill="#ACA899"/>
<rect x="31" y="450" width="9" height="1" fill="#ACA899"/>
<rect x="31" y="442" width="1" height="9" fill="#ACA899"/>
<rect x="39" y="442" width="1" height="9" fill="#ACA899"/>
<rect x="33" y="446" width="5" height="1" fill="#000"/>
<rect x="35" y="444" width="1" height="5" fill="#000"/>
<rect x="41" y="446" width="1" height="1" fill="#A0A0A0"/>
<rect x="43" y="446" width="1" height="1" fill="#A0A0A0"/>
<text x="47.0" y="450" font-size="12" fill="#000" textLength="22.0" lengthAdjust="spacingAndGlyphs">BTN</text>
<rect x="31" y="458" width="9" height="9" fill="#fff"/>
<rect x="31" y="458" width="9" height="1" fill="#ACA899"/>
<rect x="31" y="466" width="9" height="1" fill="#ACA899"/>
<rect x="31" y="458" width="1" height="9" fill="#ACA899"/>
<rect x="39" y="458" width="1" height="9" fill="#ACA899"/>
<rect x="33" y="462" width="5" height="1" fill="#000"/>
<rect x="35" y="460" width="1" height="5" fill="#000"/>
<rect x="41" y="462" width="1" height="1" fill="#A0A0A0"/>
<rect x="43" y="462" width="1" height="1" fill="#A0A0A0"/>
<text x="47.0" y="466" font-size="12" fill="#000" textLength="21.43" lengthAdjust="spacingAndGlyphs">DLY</text>
<rect x="31" y="474" width="9" height="9" fill="#fff"/>
<rect x="31" y="474" width="9" height="1" fill="#ACA899"/>
<rect x="31" y="482" width="9" height="1" fill="#ACA899"/>
<rect x="31" y="474" width="1" height="9" fill="#ACA899"/>
<rect x="39" y="474" width="1" height="9" fill="#ACA899"/>
<rect x="33" y="478" width="5" height="1" fill="#000"/>
<rect x="35" y="476" width="1" height="5" fill="#000"/>
<rect x="41" y="478" width="1" height="1" fill="#A0A0A0"/>
<rect x="43" y="478" width="1" height="1" fill="#A0A0A0"/>
<text x="47.0" y="482" font-size="12" fill="#000" textLength="16.0" lengthAdjust="spacingAndGlyphs">OR</text>
<rect x="31" y="490" width="9" height="9" fill="#fff"/>
<rect x="31" y="490" width="9" height="1" fill="#ACA899"/>
<rect x="31" y="498" width="9" height="1" fill="#ACA899"/>
<rect x="31" y="490" width="1" height="9" fill="#ACA899"/>
<rect x="39" y="490" width="1" height="9" fill="#ACA899"/>
<rect x="33" y="494" width="5" height="1" fill="#000"/>
<rect x="35" y="492" width="1" height="5" fill="#000"/>
<rect x="41" y="494" width="1" height="1" fill="#A0A0A0"/>
<rect x="43" y="494" width="1" height="1" fill="#A0A0A0"/>
<text x="47.0" y="498" font-size="12" fill="#000" textLength="22.29" lengthAdjust="spacingAndGlyphs">SEQ</text>
<rect x="31" y="506" width="9" height="9" fill="#fff"/>
<rect x="31" y="506" width="9" height="1" fill="#ACA899"/>
<rect x="31" y="514" width="9" height="1" fill="#ACA899"/>
<rect x="31" y="506" width="1" height="9" fill="#ACA899"/>
<rect x="39" y="506" width="1" height="9" fill="#ACA899"/>
<rect x="33" y="510" width="5" height="1" fill="#000"/>
<rect x="35" y="508" width="1" height="5" fill="#000"/>
<rect x="41" y="510" width="1" height="1" fill="#A0A0A0"/>
<rect x="43" y="510" width="1" height="1" fill="#A0A0A0"/>
<text x="47.0" y="514" font-size="12" fill="#000" textLength="29.7" lengthAdjust="spacingAndGlyphs">TRAD</text>
<rect x="31" y="522" width="9" height="9" fill="#fff"/>
<rect x="31" y="522" width="9" height="1" fill="#ACA899"/>
<rect x="31" y="530" width="9" height="1" fill="#ACA899"/>
<rect x="31" y="522" width="1" height="9" fill="#ACA899"/>
<rect x="39" y="522" width="1" height="9" fill="#ACA899"/>
<rect x="33" y="526" width="5" height="1" fill="#000"/>
<rect x="35" y="524" width="1" height="5" fill="#000"/>
<rect x="41" y="526" width="1" height="1" fill="#A0A0A0"/>
<rect x="43" y="526" width="1" height="1" fill="#A0A0A0"/>
<text x="47.0" y="530" font-size="12" fill="#000" textLength="25.69" lengthAdjust="spacingAndGlyphs">TRIG</text>
</g>
<defs><linearGradient id="gsbt" x1="0" y1="0" x2="0" y2="1"><stop offset="0" stop-color="#F3F1EC"/><stop offset="1" stop-color="#FEFEFB"/></linearGradient><linearGradient id="gsbb" x1="0" y1="0" x2="1" y2="1"><stop offset="0" stop-color="#DCE6FD"/><stop offset="0.5" stop-color="#C2D4FC"/><stop offset="1" stop-color="#B0C8F8"/></linearGradient></defs>
<rect x="7" y="365" width="189" height="17" fill="url(#gsbt)" stroke="none" stroke-width="1"/>
<rect x="8.5" y="366.5" width="14" height="15" rx="2" fill="url(#gsbb)" stroke="#fff" stroke-width="1" shape-rendering="geometricPrecision"/>
<rect x="9" y="381" width="13" height="1" fill="#98B2E8"/>
<rect x="25.5" y="366.5" width="122" height="15" rx="2" fill="url(#gsbb)" stroke="#fff" stroke-width="1" shape-rendering="geometricPrecision"/>
<rect x="26" y="381" width="121" height="1" fill="#98B2E8"/>
<rect x="180.5" y="366.5" width="14" height="15" rx="2" fill="url(#gsbb)" stroke="#fff" stroke-width="1" shape-rendering="geometricPrecision"/>
<rect x="181" y="381" width="13" height="1" fill="#98B2E8"/>
<path d="M17.5 370.5 L13.5 374 L17.5 377.5" fill="none" stroke="#4D6185" stroke-width="2" shape-rendering="geometricPrecision"/>
<path d="M184.5 370.5 L188.5 374 L184.5 377.5" fill="none" stroke="#4D6185" stroke-width="2" shape-rendering="geometricPrecision"/>
<rect x="82" y="370" width="1" height="8" fill="#EEF4FE"/>
<rect x="83" y="371" width="1" height="8" fill="#8CB0F8"/>
<rect x="84" y="370" width="1" height="8" fill="#EEF4FE"/>
<rect x="85" y="371" width="1" height="8" fill="#8CB0F8"/>
<rect x="86" y="370" width="1" height="8" fill="#EEF4FE"/>
<rect x="87" y="371" width="1" height="8" fill="#8CB0F8"/>
<rect x="88" y="370" width="1" height="8" fill="#EEF4FE"/>
<rect x="89" y="371" width="1" height="8" fill="#8CB0F8"/>
<rect x="4" y="747" width="80" height="1" fill="#ACA899"/>
<rect x="4" y="747" width="1" height="17" fill="#ACA899"/>
<rect x="4" y="763" width="80" height="1" fill="#fff"/>
<rect x="83" y="747" width="1" height="17" fill="#fff"/>
<rect x="86" y="747" width="842" height="1" fill="#ACA899"/>
<rect x="86" y="747" width="1" height="17" fill="#ACA899"/>
<rect x="86" y="763" width="842" height="1" fill="#fff"/>
<rect x="927" y="747" width="1" height="17" fill="#fff"/>
<rect x="929" y="747" width="91" height="1" fill="#ACA899"/>
<rect x="929" y="747" width="1" height="17" fill="#ACA899"/>
<rect x="929" y="763" width="91" height="1" fill="#fff"/>
<rect x="1019" y="747" width="1" height="17" fill="#fff"/>
<text x="5.0" y="760" font-size="12" fill="#000" textLength="52.0" lengthAdjust="spacingAndGlyphs">SHPML.mtr</text>
<text x="932.0" y="760" font-size="12" fill="#000" textLength="11.44" lengthAdjust="spacingAndGlyphs">10</text>
<path d="M1015 762 L1018 759" stroke="#ACA899" stroke-width="1.2" shape-rendering="geometricPrecision"/>
<path d="M1016 762 L1018 760" stroke="#fff" stroke-width="1" shape-rendering="geometricPrecision"/>
<path d="M1011 762 L1018 755" stroke="#ACA899" stroke-width="1.2" shape-rendering="geometricPrecision"/>
<path d="M1012 762 L1018 756" stroke="#fff" stroke-width="1" shape-rendering="geometricPrecision"/>
<path d="M1007 762 L1018 751" stroke="#ACA899" stroke-width="1.2" shape-rendering="geometricPrecision"/>
<path d="M1008 762 L1018 752" stroke="#fff" stroke-width="1" shape-rendering="geometricPrecision"/>
<rect x="202" y="50" width="818" height="1" fill="#ACA899"/>
<rect x="202" y="51" width="818" height="1" fill="#fff"/>
<rect x="205" y="54" width="1" height="22" fill="#ACA899"/>
<rect x="206" y="54" width="1" height="22" fill="#fff"/>
<rect x="211" y="54" width="23" height="1" fill="#fff"/>
<rect x="211" y="54" width="1" height="22" fill="#fff"/>
<rect x="211" y="75" width="23" height="1" fill="#716F64"/>
<rect x="233" y="54" width="1" height="22" fill="#716F64"/>
<rect x="212" y="74" width="21" height="1" fill="#ACA899"/>
<rect x="232" y="55" width="1" height="20" fill="#ACA899"/>
<rect x="234" y="54" width="23" height="1" fill="#fff"/>
<rect x="234" y="54" width="1" height="22" fill="#fff"/>
<rect x="234" y="75" width="23" height="1" fill="#716F64"/>
<rect x="256" y="54" width="1" height="22" fill="#716F64"/>
<rect x="235" y="74" width="21" height="1" fill="#ACA899"/>
<rect x="255" y="55" width="1" height="20" fill="#ACA899"/>
<rect x="257" y="54" width="23" height="1" fill="#fff"/>
<rect x="257" y="54" width="1" height="22" fill="#fff"/>
<rect x="257" y="75" width="23" height="1" fill="#716F64"/>
<rect x="279" y="54" width="1" height="22" fill="#716F64"/>
<rect x="258" y="74" width="21" height="1" fill="#ACA899"/>
<rect x="278" y="55" width="1" height="20" fill="#ACA899"/>
<rect x="289" y="54" width="23" height="1" fill="#fff"/>
<rect x="289" y="54" width="1" height="22" fill="#fff"/>
<rect x="289" y="75" width="23" height="1" fill="#716F64"/>
<rect x="311" y="54" width="1" height="22" fill="#716F64"/>
<rect x="290" y="74" width="21" height="1" fill="#ACA899"/>
<rect x="310" y="55" width="1" height="20" fill="#ACA899"/>
<rect x="312" y="54" width="23" height="1" fill="#fff"/>
<rect x="312" y="54" width="1" height="22" fill="#fff"/>
<rect x="312" y="75" width="23" height="1" fill="#716F64"/>
<rect x="334" y="54" width="1" height="22" fill="#716F64"/>
<rect x="313" y="74" width="21" height="1" fill="#ACA899"/>
<rect x="333" y="55" width="1" height="20" fill="#ACA899"/>
<rect x="343" y="54" width="23" height="1" fill="#fff"/>
<rect x="343" y="54" width="1" height="22" fill="#fff"/>
<rect x="343" y="75" width="23" height="1" fill="#716F64"/>
<rect x="365" y="54" width="1" height="22" fill="#716F64"/>
<rect x="344" y="74" width="21" height="1" fill="#ACA899"/>
<rect x="364" y="55" width="1" height="20" fill="#ACA899"/>
<rect x="366" y="54" width="23" height="1" fill="#fff"/>
<rect x="366" y="54" width="1" height="22" fill="#fff"/>
<rect x="366" y="75" width="23" height="1" fill="#716F64"/>
<rect x="388" y="54" width="1" height="22" fill="#716F64"/>
<rect x="367" y="74" width="21" height="1" fill="#ACA899"/>
<rect x="387" y="55" width="1" height="20" fill="#ACA899"/>
<rect x="389" y="54" width="24" height="1" fill="#fff"/>
<rect x="389" y="54" width="1" height="22" fill="#fff"/>
<rect x="389" y="75" width="24" height="1" fill="#716F64"/>
<rect x="412" y="54" width="1" height="22" fill="#716F64"/>
<rect x="390" y="74" width="22" height="1" fill="#ACA899"/>
<rect x="411" y="55" width="1" height="20" fill="#ACA899"/>
<rect x="422" y="54" width="24" height="1" fill="#fff"/>
<rect x="422" y="54" width="1" height="22" fill="#fff"/>
<rect x="422" y="75" width="24" height="1" fill="#716F64"/>
<rect x="445" y="54" width="1" height="22" fill="#716F64"/>
<rect x="423" y="74" width="22" height="1" fill="#ACA899"/>
<rect x="444" y="55" width="1" height="20" fill="#ACA899"/>
<rect x="446" y="54" width="12" height="1" fill="#fff"/>
<rect x="446" y="54" width="1" height="22" fill="#fff"/>
<rect x="446" y="75" width="12" height="1" fill="#716F64"/>
<rect x="457" y="54" width="1" height="22" fill="#716F64"/>
<rect x="447" y="74" width="10" height="1" fill="#ACA899"/>
<rect x="456" y="55" width="1" height="20" fill="#ACA899"/>
<rect x="462" y="54" width="24" height="1" fill="#fff"/>
<rect x="462" y="54" width="1" height="22" fill="#fff"/>
<rect x="462" y="75" width="24" height="1" fill="#716F64"/>
<rect x="485" y="54" width="1" height="22" fill="#716F64"/>
<rect x="463" y="74" width="22" height="1" fill="#ACA899"/>
<rect x="484" y="55" width="1" height="20" fill="#ACA899"/>
<rect x="486" y="54" width="12" height="1" fill="#fff"/>
<rect x="486" y="54" width="1" height="22" fill="#fff"/>
<rect x="486" y="75" width="12" height="1" fill="#716F64"/>
<rect x="497" y="54" width="1" height="22" fill="#716F64"/>
<rect x="487" y="74" width="10" height="1" fill="#ACA899"/>
<rect x="496" y="55" width="1" height="20" fill="#ACA899"/>
<rect x="502" y="54" width="24" height="1" fill="#fff"/>
<rect x="502" y="54" width="1" height="22" fill="#fff"/>
<rect x="502" y="75" width="24" height="1" fill="#716F64"/>
<rect x="525" y="54" width="1" height="22" fill="#716F64"/>
<rect x="503" y="74" width="22" height="1" fill="#ACA899"/>
<rect x="524" y="55" width="1" height="20" fill="#ACA899"/>
<rect x="526" y="54" width="12" height="1" fill="#fff"/>
<rect x="526" y="54" width="1" height="22" fill="#fff"/>
<rect x="526" y="75" width="12" height="1" fill="#716F64"/>
<rect x="537" y="54" width="1" height="22" fill="#716F64"/>
<rect x="527" y="74" width="10" height="1" fill="#ACA899"/>
<rect x="536" y="55" width="1" height="20" fill="#ACA899"/>
<rect x="547" y="54" width="23" height="1" fill="#fff"/>
<rect x="547" y="54" width="1" height="22" fill="#fff"/>
<rect x="547" y="75" width="23" height="1" fill="#716F64"/>
<rect x="569" y="54" width="1" height="22" fill="#716F64"/>
<rect x="548" y="74" width="21" height="1" fill="#ACA899"/>
<rect x="568" y="55" width="1" height="20" fill="#ACA899"/>
<rect x="570" y="54" width="23" height="1" fill="#fff"/>
<rect x="570" y="54" width="1" height="22" fill="#fff"/>
<rect x="570" y="75" width="23" height="1" fill="#716F64"/>
<rect x="592" y="54" width="1" height="22" fill="#716F64"/>
<rect x="571" y="74" width="21" height="1" fill="#ACA899"/>
<rect x="591" y="55" width="1" height="20" fill="#ACA899"/>
<rect x="283" y="54" width="1" height="22" fill="#ACA899"/>
<rect x="284" y="54" width="1" height="22" fill="#fff"/>
<rect x="339" y="54" width="1" height="22" fill="#ACA899"/>
<rect x="340" y="54" width="1" height="22" fill="#fff"/>
<rect x="416" y="54" width="1" height="22" fill="#ACA899"/>
<rect x="417" y="54" width="1" height="22" fill="#fff"/>
<rect x="542" y="54" width="1" height="22" fill="#ACA899"/>
<rect x="543" y="54" width="1" height="22" fill="#fff"/>
<rect x="449" y="64" width="5" height="1" fill="#000"/><rect x="450" y="65" width="3" height="1" fill="#000"/><rect x="451" y="66" width="1" height="1" fill="#000"/>
<rect x="489" y="64" width="5" height="1" fill="#000"/><rect x="490" y="65" width="3" height="1" fill="#000"/><rect x="491" y="66" width="1" height="1" fill="#000"/>
<rect x="529" y="64" width="5" height="1" fill="#000"/><rect x="530" y="65" width="3" height="1" fill="#000"/><rect x="531" y="66" width="1" height="1" fill="#000"/>
<rect x="202" y="76" width="818" height="1" fill="#ECE9D8"/>
<g><rect x="218" y="59" width="6" height="11" fill="#fff"/><rect x="224" y="61" width="3" height="9" fill="#fff"/><rect x="224" y="60" width="1" height="1" fill="#fff"/><rect x="225" y="60" width="1" height="1" fill="#fff"/><rect x="217" y="58" width="7" height="1" fill="#000"/><rect x="217" y="58" width="1" height="13" fill="#000"/><rect x="217" y="70" width="11" height="1" fill="#000"/><rect x="227" y="61" width="1" height="10" fill="#000"/><rect x="224" y="58" width="1" height="1" fill="#000"/><rect x="225" y="59" width="1" height="1" fill="#000"/><rect x="226" y="60" width="1" height="1" fill="#000"/><rect x="225" y="60" width="1" height="1" fill="#808080"/><rect x="237" y="61" width="1" height="10" fill="#000"/><rect x="238" y="60" width="3" height="1" fill="#000"/><rect x="241" y="61" width="1" height="1" fill="#000"/><rect x="242" y="62" width="5" height="1" fill="#000"/><rect x="238" y="61" width="1" height="1" fill="#FFFFFF"/><rect x="239" y="61" width="1" height="1" fill="#FFFF00"/><rect x="240" y="61" width="1" height="1" fill="#FFFFFF"/><rect x="238" y="62" width="1" height="1" fill="#FFFF00"/><rect x="239" y="62" width="1" height="1" fill="#FFFFFF"/><rect x="240" y="62" width="1" height="1" fill="#FFFF00"/><rect x="241" y="62" width="1" height="1" fill="#FFFFFF"/><rect x="242" y="62" width="1" height="1" fill="#FFFF00"/><rect x="243" y="62" width="1" height="1" fill="#FFFFFF"/><rect x="244" y="62" width="1" height="1" fill="#FFFF00"/><rect x="245" y="62" width="1" height="1" fill="#FFFFFF"/><rect x="238" y="63" width="1" height="1" fill="#FFFFFF"/><rect x="239" y="63" width="1" height="1" fill="#FFFF00"/><rect x="240" y="63" width="1" height="1" fill="#FFFFFF"/><rect x="241" y="63" width="1" height="1" fill="#FFFF00"/><rect x="242" y="63" width="1" height="1" fill="#FFFFFF"/><rect x="243" y="63" width="1" height="1" fill="#FFFF00"/><rect x="244" y="63" width="1" height="1" fill="#FFFFFF"/><rect x="245" y="63" width="1" height="1" fill="#FFFF00"/><rect x="238" y="64" width="1" height="1" fill="#FFFF00"/><rect x="239" y="64" width="1" height="1" fill="#FFFFFF"/><rect x="240" y="64" width="1" height="1" fill="#FFFF00"/><rect x="241" y="64" width="1" height="1" fill="#FFFFFF"/><rect x="242" y="64" width="1" height="1" fill="#FFFF00"/><rect x="243" y="64" width="1" height="1" fill="#FFFFFF"/><rect x="244" y="64" width="1" height="1" fill="#FFFF00"/><rect x="245" y="64" width="1" height="1" fill="#FFFFFF"/><rect x="238" y="65" width="1" height="1" fill="#FFFFFF"/><rect x="239" y="65" width="1" height="1" fill="#FFFF00"/><rect x="240" y="65" width="1" height="1" fill="#FFFFFF"/><rect x="241" y="65" width="1" height="1" fill="#FFFF00"/><rect x="242" y="65" width="1" height="1" fill="#FFFFFF"/><rect x="243" y="65" width="1" height="1" fill="#FFFF00"/><rect x="244" y="65" width="1" height="1" fill="#FFFFFF"/><rect x="245" y="65" width="1" height="1" fill="#FFFF00"/><rect x="238" y="66" width="1" height="1" fill="#FFFF00"/><rect x="239" y="66" width="1" height="1" fill="#FFFFFF"/><rect x="240" y="66" width="1" height="1" fill="#FFFF00"/><rect x="241" y="66" width="1" height="1" fill="#FFFFFF"/><rect x="242" y="66" width="1" height="1" fill="#FFFF00"/><rect x="243" y="66" width="1" height="1" fill="#FFFFFF"/><rect x="244" y="66" width="1" height="1" fill="#FFFF00"/><rect x="245" y="66" width="1" height="1" fill="#FFFFFF"/><rect x="238" y="67" width="1" height="1" fill="#FFFFFF"/><rect x="239" y="67" width="1" height="1" fill="#FFFF00"/><rect x="240" y="67" width="1" height="1" fill="#FFFFFF"/><rect x="241" y="67" width="1" height="1" fill="#FFFF00"/><rect x="242" y="67" width="1" height="1" fill="#FFFFFF"/><rect x="243" y="67" width="1" height="1" fill="#FFFF00"/><rect x="244" y="67" width="1" height="1" fill="#FFFFFF"/><rect x="245" y="67" width="1" height="1" fill="#FFFF00"/><rect x="238" y="68" width="1" height="1" fill="#FFFF00"/><rect x="239" y="68" width="1" height="1" fill="#FFFFFF"/><rect x="240" y="68" width="1" height="1" fill="#FFFF00"/><rect x="241" y="68" width="1" height="1" fill="#FFFFFF"/><rect x="242" y="68" width="1" height="1" fill="#FFFF00"/><rect x="243" y="68" width="1" height="1" fill="#FFFFFF"/><rect x="244" y="68" width="1" height="1" fill="#FFFF00"/><rect x="245" y="68" width="1" height="1" fill="#FFFFFF"/><rect x="238" y="69" width="1" height="1" fill="#FFFFFF"/><rect x="239" y="69" width="1" height="1" fill="#FFFF00"/><rect x="240" y="69" width="1" height="1" fill="#FFFFFF"/><rect x="241" y="69" width="1" height="1" fill="#FFFF00"/><rect x="242" y="69" width="1" height="1" fill="#FFFFFF"/><rect x="243" y="69" width="1" height="1" fill="#FFFF00"/><rect x="244" y="69" width="1" height="1" fill="#FFFFFF"/><rect x="245" y="69" width="1" height="1" fill="#FFFF00"/><path d="M237.5 70.5 L241 64.5 H253.5 L249 70.5 Z" fill="#808000" stroke="#000" stroke-width="1"/><path d="M245.5 60.5 Q248 57 251.5 59.5" fill="none" stroke="#000" stroke-width="1"/><rect x="250" y="60" width="3" height="1" fill="#000"/><rect x="251" y="61" width="1" height="1" fill="#000"/><rect x="252" y="59" width="1" height="1" fill="#000"/><rect x="261" y="58" width="14" height="14" fill="#000"/><rect x="262" y="59" width="12" height="12" fill="#808000"/><rect x="264" y="58" width="9" height="7" fill="#000"/><rect x="265" y="59" width="7" height="5" fill="#ECE9D8"/><rect x="263" y="66" width="10" height="6" fill="#000"/><rect x="270" y="67" width="2" height="3" fill="#ECE9D8"/><rect x="273" y="59" width="1" height="1" fill="#ECE9D8"/><rect x="293" y="57" width="14" height="15" fill="#000"/><rect x="294" y="58" width="12" height="1" fill="#909090"/><rect x="294" y="60" width="12" height="5" fill="#fff"/><rect x="294" y="66" width="12" height="5" fill="#fff"/><rect x="295" y="61" width="3" height="1" fill="#000"/><rect x="299" y="61" width="3" height="1" fill="#000"/><rect x="303" y="61" width="1" height="1" fill="#000"/><rect x="295" y="63" width="2" height="1" fill="#000"/><rect x="299" y="63" width="4" height="1" fill="#000"/><rect x="304" y="63" width="1" height="1" fill="#000"/><rect x="295" y="67" width="2" height="1" fill="#000"/><rect x="298" y="67" width="1" height="1" fill="#000"/><rect x="300" y="67" width="1" height="1" fill="#000"/><rect x="302" y="67" width="3" height="1" fill="#000"/><rect x="295" y="69" width="2" height="1" fill="#000"/><rect x="298" y="69" width="1" height="1" fill="#000"/><rect x="300" y="69" width="1" height="1" fill="#000"/><rect x="302" y="69" width="3" height="1" fill="#000"/><text x="318.5" y="70" font-size="12" font-weight="bold" fill="#000" textLength="7" lengthAdjust="spacingAndGlyphs">?</text><rect x="347" y="57" width="11" height="2" fill="#0000FF"/><rect x="347" y="59" width="10" height="3" fill="#fff"/><rect x="347" y="62" width="11" height="1" fill="#000"/><rect x="357" y="59" width="1" height="4" fill="#000"/><rect x="351" y="66" width="12" height="1" fill="#0000FF"/><rect x="351" y="66" width="1" height="7" fill="#000"/><rect x="352" y="67" width="10" height="5" fill="#ECE9D8"/><rect x="352" y="72" width="11" height="1" fill="#808080"/><rect x="362" y="67" width="1" height="6" fill="#808080"/><rect x="351" y="72" width="1" height="1" fill="#000"/><path d="M354 62 L355 64.5 L357.5 64.5 L355.5 66 L356.5 68.5 L354 67 L351.5 68.5 L352.5 66 L350.5 64.5 L353 64.5 Z" fill="#FFFF00" stroke="#C0C000" stroke-width="0.4"/><rect x="371" y="59" width="3" height="3" fill="#FF0000"/><rect x="372" y="62" width="1" height="6" fill="#000"/><rect x="373" y="60" width="6" height="1" fill="#000"/><path d="M373.5 61.5 L379.5 67.5" stroke="#000" stroke-width="1.2"/><rect x="379" y="58" width="7" height="6" fill="#fff"/><rect x="379" y="58" width="7" height="1" fill="#000"/><rect x="379" y="63" width="7" height="1" fill="#000"/><rect x="379" y="58" width="1" height="6" fill="#000"/><rect x="385" y="58" width="1" height="6" fill="#000"/><rect x="381" y="59" width="2" height="4" fill="#E00000"/><rect x="380" y="58" width="5" height="1" fill="#000"/><rect x="378" y="66" width="8" height="6" fill="#fff"/><rect x="378" y="66" width="8" height="1" fill="#000"/><rect x="378" y="71" width="8" height="1" fill="#000"/><rect x="378" y="66" width="1" height="6" fill="#000"/><rect x="385" y="66" width="1" height="6" fill="#000"/><rect x="380" y="68" width="3" height="2" fill="#E00000"/><rect x="381" y="67" width="1" height="4" fill="#E00000"/><rect x="370" y="67" width="7" height="6" fill="#fff"/><rect x="370" y="67" width="7" height="1" fill="#A0A0A0"/><rect x="370" y="72" width="7" height="1" fill="#A0A0A0"/><rect x="370" y="67" width="1" height="6" fill="#A0A0A0"/><rect x="376" y="67" width="1" height="6" fill="#A0A0A0"/><rect x="370" y="67" width="7" height="2" fill="#40E0F0"/><rect x="372" y="70" width="2" height="1" fill="#E00000"/><rect x="373" y="69" width="1" height="1" fill="#E00000"/><rect x="394" y="58" width="6" height="1" fill="#000"/><rect x="394" y="58" width="1" height="10" fill="#000"/><rect x="394" y="67" width="6" height="1" fill="#000"/><rect x="395" y="59" width="5" height="8" fill="#fff"/><rect x="400" y="59" width="1" height="1" fill="#000"/><rect x="396" y="60" width="3" height="1" fill="#000"/><rect x="396" y="62" width="3" height="1" fill="#000"/><rect x="396" y="64" width="3" height="1" fill="#000"/><rect x="400" y="61" width="5" height="1" fill="#000080"/><rect x="400" y="61" width="1" height="11" fill="#000080"/><rect x="400" y="71" width="9" height="1" fill="#000080"/><rect x="408" y="64" width="1" height="8" fill="#000080"/><rect x="401" y="62" width="7" height="9" fill="#fff"/><rect x="405" y="62" width="1" height="1" fill="#000080"/><rect x="406" y="63" width="1" height="1" fill="#000080"/><rect x="407" y="64" width="1" height="1" fill="#000080"/><rect x="402" y="65" width="5" height="1" fill="#000080"/><rect x="402" y="67" width="5" height="1" fill="#000080"/><rect x="402" y="69" width="5" height="1" fill="#000080"/><rect x="425" y="59" width="4" height="5" fill="#0000FF"/><rect x="426" y="60" width="2" height="1" fill="#80C0FF"/><rect x="429" y="60" width="1" height="1" fill="#A0A0A0"/><rect x="431" y="60" width="1" height="1" fill="#A0A0A0"/><rect x="433" y="58" width="5" height="4" fill="#004040"/><rect x="434" y="59" width="3" height="2" fill="#00E0E0"/><rect x="432" y="62" width="9" height="3" fill="#004040"/><rect x="437" y="63" width="2" height="1" fill="#E0E000"/><text x="426" y="72" font-size="8" font-weight="bold" fill="#000" textLength="15" lengthAdjust="spacingAndGlyphs" style="font-family:Liberation Mono">OPC</text><rect x="465" y="59" width="4" height="5" fill="#0000FF"/><rect x="466" y="60" width="2" height="1" fill="#80C0FF"/><rect x="469" y="60" width="1" height="1" fill="#A0A0A0"/><rect x="471" y="60" width="1" height="1" fill="#A0A0A0"/><rect x="473" y="58" width="5" height="4" fill="#004040"/><rect x="474" y="59" width="3" height="2" fill="#00E0E0"/><rect x="472" y="62" width="9" height="3" fill="#004040"/><rect x="477" y="63" width="2" height="1" fill="#E0E000"/><text x="466" y="72" font-size="8" font-weight="bold" fill="#000" textLength="15" lengthAdjust="spacingAndGlyphs" style="font-family:Liberation Mono">COM</text><rect x="505" y="59" width="4" height="5" fill="#0000FF"/><rect x="506" y="60" width="2" height="1" fill="#80C0FF"/><rect x="509" y="60" width="1" height="1" fill="#A0A0A0"/><rect x="511" y="60" width="1" height="1" fill="#A0A0A0"/><rect x="513" y="58" width="5" height="4" fill="#004040"/><rect x="514" y="59" width="3" height="2" fill="#00E0E0"/><rect x="512" y="62" width="9" height="3" fill="#004040"/><rect x="517" y="63" width="2" height="1" fill="#E0E000"/><text x="506" y="72" font-size="8" font-weight="bold" fill="#000" textLength="15" lengthAdjust="spacingAndGlyphs" style="font-family:Liberation Mono">TCP</text><rect x="550" y="59" width="4" height="5" fill="#0000FF"/><rect x="551" y="60" width="2" height="1" fill="#80C0FF"/><rect x="554" y="60" width="1" height="1" fill="#A0A0A0"/><rect x="556" y="60" width="1" height="1" fill="#A0A0A0"/><rect x="558" y="58" width="5" height="4" fill="#004040"/><rect x="559" y="59" width="3" height="2" fill="#00E0E0"/><rect x="557" y="62" width="9" height="3" fill="#004040"/><rect x="562" y="63" width="2" height="1" fill="#E0E000"/><rect x="555" y="68" width="5" height="1" fill="#000"/><rect x="555" y="70" width="5" height="1" fill="#000"/><rect x="574" y="58" width="4" height="7" fill="#800000"/><rect x="575" y="59" width="2" height="5" fill="#0000FF"/><rect x="581" y="61" width="6" height="1" fill="#A00000"/><rect x="586" y="61" width="1" height="5" fill="#A00000"/><path d="M579 61.5 L582 59 V64 Z" fill="#A00000"/><rect x="581" y="66" width="5" height="4" fill="#004040"/><rect x="582" y="67" width="3" height="2" fill="#00E0E0"/><rect x="580" y="70" width="9" height="3" fill="#A00000"/><rect x="581" y="71" width="6" height="1" fill="#FFC0C0"/></g>
<rect x="202" y="78" width="818" height="1" fill="#fff"/>
<rect x="202" y="78" width="1" height="31" fill="#fff"/>
<rect x="203" y="79" width="817" height="1" fill="#ACA899"/>
<rect x="203" y="79" width="1" height="29" fill="#ACA899"/>
<rect x="203" y="107" width="817" height="1" fill="#fff"/>
<rect x="202" y="108" width="818" height="1" fill="#ACA899"/>
<rect x="247" y="80" width="1" height="27" fill="#ACA899"/>
<rect x="248" y="80" width="1" height="27" fill="#fff"/>
<rect x="298" y="80" width="1" height="27" fill="#ACA899"/>
<rect x="299" y="80" width="1" height="27" fill="#fff"/>
<rect x="378" y="80" width="1" height="27" fill="#ACA899"/>
<rect x="379" y="80" width="1" height="27" fill="#fff"/>
<rect x="913" y="80" width="1" height="27" fill="#ACA899"/>
<rect x="914" y="80" width="1" height="27" fill="#fff"/>
<rect x="964" y="80" width="1" height="27" fill="#ACA899"/>
<rect x="965" y="80" width="1" height="27" fill="#fff"/>
<rect x="1018" y="79" width="1" height="29" fill="#ACA899"/>
<text x="213.0" y="90" font-size="10" fill="#000" textLength="25.66" lengthAdjust="spacingAndGlyphs" stroke="#000" stroke-width="0.35">Адрес</text>
<text x="255.0" y="90" font-size="10" fill="#000" textLength="35.45" lengthAdjust="spacingAndGlyphs" stroke="#000" stroke-width="0.35">Порядок</text>
<text x="928.0" y="90" font-size="10" fill="#000" textLength="23.09" lengthAdjust="spacingAndGlyphs" stroke="#000" stroke-width="0.35">Поток</text>
<text x="976.0" y="90" font-size="10" fill="#000" textLength="31.32" lengthAdjust="spacingAndGlyphs" stroke="#000" stroke-width="0.35">Группы</text>
<rect x="202" y="113" width="23" height="1" fill="#fff"/>
<rect x="202" y="113" width="1" height="22" fill="#fff"/>
<rect x="202" y="134" width="23" height="1" fill="#716F64"/>
<rect x="224" y="113" width="1" height="22" fill="#716F64"/>
<rect x="203" y="133" width="21" height="1" fill="#ACA899"/>
<rect x="223" y="114" width="1" height="20" fill="#ACA899"/>
<rect x="225" y="113" width="23" height="1" fill="#fff"/>
<rect x="225" y="113" width="1" height="22" fill="#fff"/>
<rect x="225" y="134" width="23" height="1" fill="#716F64"/>
<rect x="247" y="113" width="1" height="22" fill="#716F64"/>
<rect x="226" y="133" width="21" height="1" fill="#ACA899"/>
<rect x="246" y="114" width="1" height="20" fill="#ACA899"/>
<rect x="256" y="113" width="23" height="1" fill="#fff"/>
<rect x="256" y="113" width="1" height="22" fill="#fff"/>
<rect x="256" y="134" width="23" height="1" fill="#716F64"/>
<rect x="278" y="113" width="1" height="22" fill="#716F64"/>
<rect x="257" y="133" width="21" height="1" fill="#ACA899"/>
<rect x="277" y="114" width="1" height="20" fill="#ACA899"/>
<rect x="279" y="113" width="23" height="1" fill="#fff"/>
<rect x="279" y="113" width="1" height="22" fill="#fff"/>
<rect x="279" y="134" width="23" height="1" fill="#716F64"/>
<rect x="301" y="113" width="1" height="22" fill="#716F64"/>
<rect x="280" y="133" width="21" height="1" fill="#ACA899"/>
<rect x="300" y="114" width="1" height="20" fill="#ACA899"/>
<rect x="302" y="113" width="23" height="1" fill="#fff"/>
<rect x="302" y="113" width="1" height="22" fill="#fff"/>
<rect x="302" y="134" width="23" height="1" fill="#716F64"/>
<rect x="324" y="113" width="1" height="22" fill="#716F64"/>
<rect x="303" y="133" width="21" height="1" fill="#ACA899"/>
<rect x="323" y="114" width="1" height="20" fill="#ACA899"/>
<rect x="325" y="113" width="23" height="1" fill="#fff"/>
<rect x="325" y="113" width="1" height="22" fill="#fff"/>
<rect x="325" y="134" width="23" height="1" fill="#716F64"/>
<rect x="347" y="113" width="1" height="22" fill="#716F64"/>
<rect x="326" y="133" width="21" height="1" fill="#ACA899"/>
<rect x="346" y="114" width="1" height="20" fill="#ACA899"/>
<rect x="356" y="113" width="23" height="1" fill="#fff"/>
<rect x="356" y="113" width="1" height="22" fill="#fff"/>
<rect x="356" y="134" width="23" height="1" fill="#716F64"/>
<rect x="378" y="113" width="1" height="22" fill="#716F64"/>
<rect x="357" y="133" width="21" height="1" fill="#ACA899"/>
<rect x="377" y="114" width="1" height="20" fill="#ACA899"/>
<rect x="379" y="113" width="23" height="1" fill="#fff"/>
<rect x="379" y="113" width="1" height="22" fill="#fff"/>
<rect x="379" y="134" width="23" height="1" fill="#716F64"/>
<rect x="401" y="113" width="1" height="22" fill="#716F64"/>
<rect x="380" y="133" width="21" height="1" fill="#ACA899"/>
<rect x="400" y="114" width="1" height="20" fill="#ACA899"/>
<rect x="402" y="113" width="23" height="1" fill="#fff"/>
<rect x="402" y="113" width="1" height="22" fill="#fff"/>
<rect x="402" y="134" width="23" height="1" fill="#716F64"/>
<rect x="424" y="113" width="1" height="22" fill="#716F64"/>
<rect x="403" y="133" width="21" height="1" fill="#ACA899"/>
<rect x="423" y="114" width="1" height="20" fill="#ACA899"/>
<rect x="202" y="138" width="815" height="1" fill="#ACA899"/>
<rect x="202" y="139" width="815" height="1" fill="#fff"/>
<g><rect x="206" y="118" width="15" height="12" fill="#fff"/><rect x="206" y="118" width="15" height="1" fill="#000080"/><rect x="206" y="129" width="15" height="1" fill="#000080"/><rect x="206" y="118" width="1" height="12" fill="#000080"/><rect x="220" y="118" width="1" height="12" fill="#000080"/><rect x="206" y="119" width="15" height="1" fill="#000080"/><rect x="208" y="121" width="11" height="7" fill="#fff"/><rect x="208" y="121" width="11" height="1" fill="#000"/><rect x="208" y="127" width="11" height="1" fill="#000"/><rect x="208" y="121" width="1" height="7" fill="#000"/><rect x="218" y="121" width="1" height="7" fill="#000"/><rect x="209" y="123" width="9" height="1" fill="#000"/><rect x="209" y="124" width="2" height="3" fill="#C0C0C0"/><rect x="211" y="124" width="1" height="3" fill="#000"/><rect x="230" y="116" width="7" height="6" fill="#C4E0F8"/><rect x="231" y="117" width="4" height="3" fill="#E4F4FF"/><rect x="230" y="116" width="7" height="1" fill="#A8B8D8"/><rect x="230" y="117" width="1" height="4" fill="#98A8C8"/><rect x="236" y="117" width="1" height="4" fill="#8898B8"/><rect x="229" y="123" width="13" height="8" fill="#EEEEEE"/><rect x="230" y="122" width="10" height="1" fill="#E0E0E0"/><rect x="229" y="127" width="13" height="1" fill="#D4D4D4"/><rect x="229" y="129" width="13" height="1" fill="#9C9C9C"/><rect x="230" y="130" width="11" height="1" fill="#B8B8B8"/><rect x="241" y="124" width="1" height="7" fill="#A8A8A8"/><rect x="239" y="125" width="2" height="2" fill="#30F030"/><rect x="238" y="127" width="3" height="1" fill="#808080"/><rect x="262" y="116" width="3" height="9" fill="#008000"/><rect x="259" y="119" width="9" height="3" fill="#008000"/><rect x="265" y="123" width="10" height="9" fill="#fff"/><rect x="265" y="123" width="10" height="1" fill="#000"/><rect x="265" y="131" width="10" height="1" fill="#000"/><rect x="265" y="123" width="1" height="9" fill="#000"/><rect x="274" y="123" width="1" height="9" fill="#000"/><rect x="266" y="124" width="8" height="2" fill="#808080"/><rect x="285" y="116" width="3" height="9" fill="#008000"/><rect x="282" y="119" width="9" height="3" fill="#008000"/><rect x="288.5" y="123.5" width="9" height="7" rx="1.5" fill="#90F0F0" stroke="#404040" shape-rendering="geometricPrecision"/><rect x="290" y="125" width="3" height="1" fill="#60A0A0"/><rect x="294" y="125" width="2" height="1" fill="#60A0A0"/><rect x="290" y="127" width="2" height="1" fill="#60A0A0"/><rect x="293" y="127" width="3" height="1" fill="#60A0A0"/><rect x="306" y="119" width="8" height="3" fill="#FF0000"/><rect x="311" y="123" width="10" height="9" fill="#fff"/><rect x="311" y="123" width="10" height="1" fill="#000"/><rect x="311" y="131" width="10" height="1" fill="#000"/><rect x="311" y="123" width="1" height="9" fill="#000"/><rect x="320" y="123" width="1" height="9" fill="#000"/><rect x="312" y="124" width="8" height="2" fill="#808080"/><rect x="329" y="119" width="8" height="3" fill="#FF0000"/><path d="M330 128.5 H336 V124.5 H342" fill="none" stroke="#006000" stroke-width="2.6" shape-rendering="geometricPrecision"/><path d="M330 128.5 H336 V124.5 H342" fill="none" stroke="#00E000" stroke-width="1.4" shape-rendering="geometricPrecision"/><rect x="360" y="117" width="9" height="7" fill="#fff"/><rect x="360" y="117" width="9" height="1" fill="#000"/><rect x="360" y="123" width="9" height="1" fill="#000"/><rect x="360" y="117" width="1" height="7" fill="#000"/><rect x="368" y="117" width="1" height="7" fill="#000"/><rect x="361" y="118" width="7" height="2" fill="#808080"/><rect x="362" y="121" width="9" height="7" fill="#fff"/><rect x="362" y="121" width="9" height="1" fill="#000"/><rect x="362" y="127" width="9" height="1" fill="#000"/><rect x="362" y="121" width="1" height="7" fill="#000"/><rect x="370" y="121" width="1" height="7" fill="#000"/><rect x="363" y="122" width="7" height="2" fill="#808080"/><rect x="364" y="125" width="9" height="7" fill="#fff"/><rect x="364" y="125" width="9" height="1" fill="#000"/><rect x="364" y="131" width="9" height="1" fill="#000"/><rect x="364" y="125" width="1" height="7" fill="#000"/><rect x="372" y="125" width="1" height="7" fill="#000"/><rect x="365" y="126" width="7" height="2" fill="#808080"/><rect x="383" y="118" width="13" height="5" fill="#FFFF00"/><rect x="383" y="118" width="13" height="1" fill="#000"/><rect x="383" y="122" width="13" height="1" fill="#000"/><rect x="383" y="118" width="1" height="5" fill="#000"/><rect x="395" y="118" width="1" height="5" fill="#000"/><rect x="396" y="120" width="2" height="1" fill="#000"/><rect x="384" y="124" width="13" height="5" fill="#00FFFF"/><rect x="384" y="124" width="13" height="1" fill="#000"/><rect x="384" y="128" width="13" height="1" fill="#000"/><rect x="384" y="124" width="1" height="5" fill="#000"/><rect x="396" y="124" width="1" height="5" fill="#000"/><rect x="382" y="126" width="2" height="1" fill="#000"/><rect x="406" y="117" width="10" height="7" fill="#20E0FF"/><rect x="406" y="117" width="10" height="1" fill="#0060C0"/><rect x="406" y="123" width="10" height="1" fill="#0060C0"/><rect x="406" y="117" width="1" height="7" fill="#0060C0"/><rect x="415" y="117" width="1" height="7" fill="#0060C0"/><rect x="407" y="118" width="8" height="1" fill="#0080FF"/><rect x="410" y="125" width="10" height="7" fill="#20E0FF"/><rect x="410" y="125" width="10" height="1" fill="#0060C0"/><rect x="410" y="131" width="10" height="1" fill="#0060C0"/><rect x="410" y="125" width="1" height="7" fill="#0060C0"/><rect x="419" y="125" width="1" height="7" fill="#0060C0"/><rect x="411" y="126" width="8" height="1" fill="#0080FF"/></g>
<defs><pattern id="pdot" width="2" height="2" patternUnits="userSpaceOnUse"><rect width="2" height="2" fill="#ECE9D8"/><rect width="1" height="1" fill="#fff"/><rect x="1" y="1" width="1" height="1" fill="#fff"/></pattern></defs>
<rect x="1000" y="141" width="16" height="567" fill="url(#pdot)" stroke="none" stroke-width="1"/>
<rect x="1000" y="141" width="16" height="17" fill="#ECE9D8" stroke="none" stroke-width="1"/>
<rect x="1000" y="141" width="16" height="1" fill="#ECE9D8"/>
<rect x="1000" y="141" width="1" height="17" fill="#ECE9D8"/>
<rect x="1001" y="142" width="14" height="1" fill="#fff"/>
<rect x="1001" y="142" width="1" height="15" fill="#fff"/>
<rect x="1000" y="157" width="16" height="1" fill="#716F64"/>
<rect x="1015" y="141" width="1" height="17" fill="#716F64"/>
<rect x="1001" y="156" width="14" height="1" fill="#ACA899"/>
<rect x="1014" y="142" width="1" height="15" fill="#ACA899"/>
<path d="M1004 151 h7 l-3.5 -4 z" fill="#000" shape-rendering="geometricPrecision"/>
<rect x="1000" y="158" width="16" height="295" fill="#ECE9D8" stroke="none" stroke-width="1"/>
<rect x="1000" y="158" width="16" height="1" fill="#ECE9D8"/>
<rect x="1000" y="158" width="1" height="295" fill="#ECE9D8"/>
<rect x="1001" y="159" width="14" height="1" fill="#fff"/>
<rect x="1001" y="159" width="1" height="293" fill="#fff"/>
<rect x="1000" y="452" width="16" height="1" fill="#716F64"/>
<rect x="1015" y="158" width="1" height="295" fill="#716F64"/>
<rect x="1001" y="451" width="14" height="1" fill="#ACA899"/>
<rect x="1014" y="159" width="1" height="293" fill="#ACA899"/>
<rect x="1000" y="691" width="16" height="17" fill="#ECE9D8" stroke="none" stroke-width="1"/>
<rect x="1000" y="691" width="16" height="1" fill="#ECE9D8"/>
<rect x="1000" y="691" width="1" height="17" fill="#ECE9D8"/>
<rect x="1001" y="692" width="14" height="1" fill="#fff"/>
<rect x="1001" y="692" width="1" height="15" fill="#fff"/>
<rect x="1000" y="707" width="16" height="1" fill="#716F64"/>
<rect x="1015" y="691" width="1" height="17" fill="#716F64"/>
<rect x="1001" y="706" width="14" height="1" fill="#ACA899"/>
<rect x="1014" y="692" width="1" height="15" fill="#ACA899"/>
<path d="M1004 697 h7 l-3.5 4 z" fill="#000" shape-rendering="geometricPrecision"/>
<rect x="203" y="708" width="798" height="16" fill="url(#pdot)" stroke="none" stroke-width="1"/>
<rect x="203" y="708" width="17" height="16" fill="#ECE9D8" stroke="none" stroke-width="1"/>
<rect x="203" y="708" width="17" height="1" fill="#ECE9D8"/>
<rect x="203" y="708" width="1" height="16" fill="#ECE9D8"/>
<rect x="204" y="709" width="15" height="1" fill="#fff"/>
<rect x="204" y="709" width="1" height="14" fill="#fff"/>
<rect x="203" y="723" width="17" height="1" fill="#716F64"/>
<rect x="219" y="708" width="1" height="16" fill="#716F64"/>
<rect x="204" y="722" width="15" height="1" fill="#ACA899"/>
<rect x="218" y="709" width="1" height="14" fill="#ACA899"/>
<path d="M214 712 v7 l-4 -3.5 z" fill="#000" shape-rendering="geometricPrecision"/>
<rect x="220" y="708" width="479" height="16" fill="#ECE9D8" stroke="none" stroke-width="1"/>
<rect x="220" y="708" width="479" height="1" fill="#ECE9D8"/>
<rect x="220" y="708" width="1" height="16" fill="#ECE9D8"/>
<rect x="221" y="709" width="477" height="1" fill="#fff"/>
<rect x="221" y="709" width="1" height="14" fill="#fff"/>
<rect x="220" y="723" width="479" height="1" fill="#716F64"/>
<rect x="698" y="708" width="1" height="16" fill="#716F64"/>
<rect x="221" y="722" width="477" height="1" fill="#ACA899"/>
<rect x="697" y="709" width="1" height="14" fill="#ACA899"/>
<rect x="987" y="708" width="17" height="16" fill="#ECE9D8" stroke="none" stroke-width="1"/>
<rect x="987" y="708" width="17" height="1" fill="#ECE9D8"/>
<rect x="987" y="708" width="1" height="16" fill="#ECE9D8"/>
<rect x="988" y="709" width="15" height="1" fill="#fff"/>
<rect x="988" y="709" width="1" height="14" fill="#fff"/>
<rect x="987" y="723" width="17" height="1" fill="#716F64"/>
<rect x="1003" y="708" width="1" height="16" fill="#716F64"/>
<rect x="988" y="722" width="15" height="1" fill="#ACA899"/>
<rect x="1002" y="709" width="1" height="14" fill="#ACA899"/>
<path d="M993 712 v7 l4 -3.5 z" fill="#000" shape-rendering="geometricPrecision"/>
<rect x="202" y="725" width="815" height="1" fill="#fff"/>
<rect x="202" y="725" width="1" height="20" fill="#fff"/>
<rect x="202" y="744" width="815" height="1" fill="#ACA899"/>
<rect x="1016" y="725" width="1" height="20" fill="#ACA899"/>
<rect x="203" y="726" width="813" height="1" fill="#ACA899"/>
<rect x="203" y="726" width="1" height="18" fill="#ACA899"/>
<rect x="203" y="743" width="813" height="1" fill="#fff"/>
<rect x="1015" y="726" width="1" height="18" fill="#fff"/>
<text x="212.0" y="739" font-size="11" font-weight="bold" fill="#000" textLength="97.65" lengthAdjust="spacingAndGlyphs">S01 Управление</text>
<defs><clipPath id="clipC"><rect x="203" y="140" width="797" height="568"/></clipPath></defs>
<g clip-path="url(#clipC)">
<rect x="298" y="144" width="692" height="1" fill="#000"/>
<rect x="298" y="144" width="1" height="95" fill="#000"/>
<rect x="298" y="238" width="39" height="1" fill="#000"/>
<rect x="989" y="144" width="1" height="123" fill="#000"/>
<rect x="958" y="266" width="32" height="1" fill="#000"/>
<rect x="305" y="254" width="32" height="1" fill="#000"/>
<rect x="305" y="254" width="1" height="193" fill="#000"/>
<rect x="305" y="446" width="24" height="1" fill="#000"/>
<rect x="409" y="238" width="47" height="1" fill="#000"/>
<rect x="455" y="198" width="1" height="41" fill="#000"/>
<rect x="455" y="198" width="54" height="1" fill="#000"/>
<rect x="442" y="182" width="1" height="129" fill="#000"/>
<rect x="442" y="182" width="67" height="1" fill="#000"/>
<rect x="278" y="310" width="565" height="1" fill="#000"/>
<rect x="353" y="309" width="3" height="3" fill="#000"/>
<rect x="441" y="309" width="3" height="3" fill="#000"/>
<rect x="593" y="309" width="3" height="3" fill="#000"/>
<rect x="842" y="298" width="1" height="13" fill="#000"/>
<rect x="842" y="298" width="39" height="1" fill="#000"/>
<rect x="594" y="210" width="1" height="101" fill="#000"/>
<rect x="594" y="210" width="135" height="1" fill="#000"/>
<rect x="569" y="182" width="12" height="1" fill="#000"/>
<rect x="591" y="188" width="1" height="7" fill="#000"/>
<rect x="591" y="194" width="138" height="1" fill="#000"/>
<rect x="717" y="226" width="12" height="1" fill="#000"/>
<rect x="717" y="242" width="12" height="1" fill="#000"/>
<rect x="650" y="258" width="1" height="431" fill="#000"/>
<rect x="650" y="258" width="77" height="1" fill="#000"/>
<rect x="650" y="688" width="351" height="1" fill="#000"/>
<rect x="662" y="274" width="1" height="93" fill="#000"/>
<rect x="662" y="274" width="65" height="1" fill="#000"/>
<rect x="661" y="365" width="3" height="3" fill="#000"/>
<rect x="803" y="194" width="18" height="1" fill="#000"/>
<rect x="820" y="194" width="1" height="57" fill="#000"/>
<rect x="820" y="250" width="61" height="1" fill="#000"/>
<rect x="803" y="210" width="11" height="1" fill="#000"/>
<rect x="958" y="250" width="43" height="1" fill="#000"/>
<rect x="818" y="266" width="1" height="101" fill="#000"/>
<rect x="818" y="266" width="63" height="1" fill="#000"/>
<rect x="497" y="366" width="322" height="1" fill="#000"/>
<rect x="278" y="326" width="12" height="1" fill="#000"/>
<rect x="354" y="310" width="1" height="73" fill="#000"/>
<rect x="354" y="382" width="83" height="1" fill="#000"/>
<rect x="401" y="446" width="19" height="1" fill="#000"/>
<rect x="419" y="366" width="1" height="81" fill="#000"/>
<rect x="419" y="366" width="18" height="1" fill="#000"/>
<rect x="282" y="394" width="24" height="1" fill="#000"/>
<rect x="304" y="393" width="3" height="3" fill="#000"/>
<rect x="282" y="410" width="11" height="1" fill="#000"/>
<rect x="298" y="462" width="31" height="1" fill="#000"/>
<rect x="298" y="462" width="1" height="246" fill="#000"/>
<rect x="310" y="478" width="19" height="1" fill="#000"/>
<rect x="310" y="478" width="1" height="230" fill="#000"/>
<rect x="318" y="494" width="11" height="1" fill="#808080"/>
<rect x="870" y="282" width="10" height="1" fill="#808080"/>
<rect x="870" y="314" width="10" height="1" fill="#808080"/>
<rect x="959" y="282" width="11" height="1" fill="#000"/>
<rect x="959" y="298" width="11" height="1" fill="#000"/>
<rect x="959" y="314" width="11" height="1" fill="#000"/>
<rect x="959" y="330" width="11" height="1" fill="#000"/>
<rect x="959" y="346" width="11" height="1" fill="#000"/>
<rect x="959" y="362" width="11" height="1" fill="#000"/>
<rect x="959" y="378" width="11" height="1" fill="#000"/>
<rect x="959" y="394" width="11" height="1" fill="#000"/>
<rect x="959" y="410" width="11" height="1" fill="#000"/>
<rect x="959" y="426" width="11" height="1" fill="#000"/>
<rect x="959" y="442" width="11" height="1" fill="#000"/>
<rect x="959" y="458" width="11" height="1" fill="#000"/>
<rect x="959" y="474" width="11" height="1" fill="#000"/>
<rect x="959" y="490" width="11" height="1" fill="#000"/>
<rect x="959" y="506" width="11" height="1" fill="#000"/>
<rect x="959" y="522" width="11" height="1" fill="#000"/>
<rect x="959" y="538" width="11" height="1" fill="#000"/>
<rect x="959" y="554" width="11" height="1" fill="#000"/>
<rect x="959" y="570" width="11" height="1" fill="#000"/>
<rect x="959" y="586" width="11" height="1" fill="#000"/>
<rect x="959" y="602" width="11" height="1" fill="#000"/>
<rect x="959" y="618" width="11" height="1" fill="#000"/>
<rect x="959" y="634" width="11" height="1" fill="#000"/>
<rect x="959" y="650" width="11" height="1" fill="#000"/>
<rect x="336" y="212" width="74" height="66" fill="#fff" stroke="none" stroke-width="1"/>
<rect x="336" y="212" width="74" height="18" fill="#C8C8C8" stroke="none" stroke-width="1"/>
<rect x="336" y="212" width="74" height="1" fill="#000"/>
<rect x="336" y="230" width="74" height="1" fill="#000"/>
<rect x="336" y="262" width="74" height="1" fill="#000"/>
<rect x="336" y="277" width="74" height="1" fill="#000"/>
<rect x="336" y="212" width="1" height="66" fill="#000"/>
<rect x="409" y="212" width="1" height="66" fill="#000"/>
<text x="364.0" y="226" font-size="12" font-weight="bold" fill="#000" textLength="17.0" lengthAdjust="spacingAndGlyphs">OR</text>
<text x="339" y="241" font-size="10" fill="#000" textLength="34.3" lengthAdjust="spacingAndGlyphs">Input 00</text>
<text x="339" y="257" font-size="10" fill="#000" textLength="34.3" lengthAdjust="spacingAndGlyphs">Input 01</text>
<text x="377.5" y="241" font-size="10" fill="#000" textLength="28.5" lengthAdjust="spacingAndGlyphs">Output</text>
<text x="344.0" y="274" font-size="10" fill="#000" textLength="56.93" lengthAdjust="spacingAndGlyphs">S01_on_res</text>
<rect x="508" y="156" width="62" height="66" fill="#fff" stroke="none" stroke-width="1"/>
<rect x="508" y="156" width="62" height="18" fill="#C8C8C8" stroke="none" stroke-width="1"/>
<rect x="508" y="156" width="62" height="1" fill="#000"/>
<rect x="508" y="174" width="62" height="1" fill="#000"/>
<rect x="508" y="206" width="62" height="1" fill="#000"/>
<rect x="508" y="221" width="62" height="1" fill="#000"/>
<rect x="508" y="156" width="1" height="66" fill="#000"/>
<rect x="569" y="156" width="1" height="66" fill="#000"/>
<text x="525.0" y="170" font-size="12" font-weight="bold" fill="#000" textLength="27.67" lengthAdjust="spacingAndGlyphs">TRIG</text>
<text x="511" y="185" font-size="10" fill="#000" textLength="14.3" lengthAdjust="spacingAndGlyphs">Set</text>
<text x="511" y="201" font-size="10" fill="#000" textLength="24.8" lengthAdjust="spacingAndGlyphs">Reset</text>
<text x="537.5" y="185" font-size="10" fill="#000" textLength="28.5" lengthAdjust="spacingAndGlyphs">Output</text>
<text x="521.0" y="218" font-size="10" fill="#000" textLength="35.5" lengthAdjust="spacingAndGlyphs">S01_on</text>
<rect x="728" y="168" width="76" height="130" fill="#fff" stroke="none" stroke-width="1"/>
<rect x="728" y="168" width="76" height="18" fill="#C8C8C8" stroke="none" stroke-width="1"/>
<rect x="728" y="168" width="76" height="1" fill="#000"/>
<rect x="728" y="186" width="76" height="1" fill="#000"/>
<rect x="728" y="282" width="76" height="1" fill="#000"/>
<rect x="728" y="297" width="76" height="1" fill="#000"/>
<rect x="728" y="168" width="1" height="130" fill="#000"/>
<rect x="803" y="168" width="1" height="130" fill="#000"/>
<text x="749.0" y="182" font-size="12" font-weight="bold" fill="#000" textLength="33.34" lengthAdjust="spacingAndGlyphs">TRAD</text>
<text x="731" y="197" font-size="10" fill="#000" textLength="37.0" lengthAdjust="spacingAndGlyphs">MasterIn</text>
<text x="731" y="213" font-size="10" fill="#000" textLength="30.3" lengthAdjust="spacingAndGlyphs">TrigSet</text>
<text x="731" y="229" font-size="10" fill="#000" textLength="29.6" lengthAdjust="spacingAndGlyphs">Enable</text>
<text x="731" y="245" font-size="10" fill="#000" textLength="29.6" lengthAdjust="spacingAndGlyphs">Enable</text>
<text x="731" y="261" font-size="10" fill="#000" textLength="29.6" lengthAdjust="spacingAndGlyphs">Enable</text>
<text x="731" y="277" font-size="10" fill="#000" textLength="29.6" lengthAdjust="spacingAndGlyphs">Enable</text>
<text x="771.5" y="197" font-size="10" fill="#000" textLength="28.5" lengthAdjust="spacingAndGlyphs">Output</text>
<text x="772.5" y="213" font-size="10" fill="#000" textLength="27.5" lengthAdjust="spacingAndGlyphs">Ready</text>
<text x="748.0" y="294" font-size="10" fill="#000" textLength="36.51" lengthAdjust="spacingAndGlyphs">S01_on</text>
<circle cx="728" cy="258.5" r="2.5" fill="#fff" stroke="#000" stroke-width="1" shape-rendering="geometricPrecision"/>
<circle cx="728" cy="274.5" r="2.5" fill="#fff" stroke="#000" stroke-width="1" shape-rendering="geometricPrecision"/>
<rect x="880" y="224" width="79" height="450" fill="#fff" stroke="none" stroke-width="1"/>
<rect x="880" y="224" width="79" height="18" fill="#C8C8C8" stroke="none" stroke-width="1"/>
<rect x="880" y="224" width="79" height="1" fill="#000"/>
<rect x="880" y="242" width="79" height="1" fill="#000"/>
<rect x="880" y="658" width="79" height="1" fill="#000"/>
<rect x="880" y="673" width="79" height="1" fill="#000"/>
<rect x="880" y="224" width="1" height="450" fill="#000"/>
<rect x="958" y="224" width="1" height="450" fill="#000"/>
<text x="908.0" y="238" font-size="12" font-weight="bold" fill="#000" textLength="24.31" lengthAdjust="spacingAndGlyphs">SEQ</text>
<text x="883" y="253" font-size="10" fill="#000" textLength="21.1" lengthAdjust="spacingAndGlyphs">Input</text>
<text x="883" y="269" font-size="10" fill="#000" textLength="24.8" lengthAdjust="spacingAndGlyphs">Stop1</text>
<text x="883" y="285" font-size="10" fill="#000" textLength="24.8" lengthAdjust="spacingAndGlyphs">Stop2</text>
<text x="883" y="301" font-size="10" fill="#000" textLength="24.8" lengthAdjust="spacingAndGlyphs">Reset</text>
<text x="883" y="317" font-size="10" fill="#000" textLength="37.5" lengthAdjust="spacingAndGlyphs">Suspend</text>
<text x="926.5" y="253" font-size="10" fill="#000" textLength="28.5" lengthAdjust="spacingAndGlyphs">Output</text>
<text x="930.2" y="269" font-size="10" fill="#000" textLength="24.8" lengthAdjust="spacingAndGlyphs">Stop1</text>
<text x="930.2" y="285" font-size="10" fill="#000" textLength="24.8" lengthAdjust="spacingAndGlyphs">Stop2</text>
<text x="931.2" y="301" font-size="10" fill="#000" textLength="23.8" lengthAdjust="spacingAndGlyphs">Mode</text>
<text x="924.4" y="317" font-size="10" fill="#000" textLength="30.6" lengthAdjust="spacingAndGlyphs">CurOut</text>
<text x="940.2" y="333" font-size="10" fill="#000" textLength="14.8" lengthAdjust="spacingAndGlyphs">Cnt</text>
<text x="921.2" y="349" font-size="10" fill="#000" textLength="33.8" lengthAdjust="spacingAndGlyphs">Out 000</text>
<text x="921.2" y="365" font-size="10" fill="#000" textLength="33.8" lengthAdjust="spacingAndGlyphs">Out 001</text>
<text x="921.2" y="381" font-size="10" fill="#000" textLength="33.8" lengthAdjust="spacingAndGlyphs">Out 002</text>
<text x="921.2" y="397" font-size="10" fill="#000" textLength="33.8" lengthAdjust="spacingAndGlyphs">Out 003</text>
<text x="921.2" y="413" font-size="10" fill="#000" textLength="33.8" lengthAdjust="spacingAndGlyphs">Out 004</text>
<text x="921.2" y="429" font-size="10" fill="#000" textLength="33.8" lengthAdjust="spacingAndGlyphs">Out 005</text>
<text x="921.2" y="445" font-size="10" fill="#000" textLength="33.8" lengthAdjust="spacingAndGlyphs">Out 006</text>
<text x="921.2" y="461" font-size="10" fill="#000" textLength="33.8" lengthAdjust="spacingAndGlyphs">Out 007</text>
<text x="921.2" y="477" font-size="10" fill="#000" textLength="33.8" lengthAdjust="spacingAndGlyphs">Out 008</text>
<text x="921.2" y="493" font-size="10" fill="#000" textLength="33.8" lengthAdjust="spacingAndGlyphs">Out 009</text>
<text x="921.2" y="509" font-size="10" fill="#000" textLength="33.8" lengthAdjust="spacingAndGlyphs">Out 010</text>
<text x="921.9" y="525" font-size="10" fill="#000" textLength="33.1" lengthAdjust="spacingAndGlyphs">Out 011</text>
<text x="921.2" y="541" font-size="10" fill="#000" textLength="33.8" lengthAdjust="spacingAndGlyphs">Out 012</text>
<text x="921.2" y="557" font-size="10" fill="#000" textLength="33.8" lengthAdjust="spacingAndGlyphs">Out 013</text>
<text x="921.2" y="573" font-size="10" fill="#000" textLength="33.8" lengthAdjust="spacingAndGlyphs">Out 014</text>
<text x="921.2" y="589" font-size="10" fill="#000" textLength="33.8" lengthAdjust="spacingAndGlyphs">Out 015</text>
<text x="921.2" y="605" font-size="10" fill="#000" textLength="33.8" lengthAdjust="spacingAndGlyphs">Out 016</text>
<text x="921.2" y="621" font-size="10" fill="#000" textLength="33.8" lengthAdjust="spacingAndGlyphs">Out 017</text>
<text x="921.2" y="637" font-size="10" fill="#000" textLength="33.8" lengthAdjust="spacingAndGlyphs">Out 018</text>
<text x="921.2" y="653" font-size="10" fill="#000" textLength="33.8" lengthAdjust="spacingAndGlyphs">Out 019</text>
<text x="910.0" y="670" font-size="10" fill="#000" textLength="16.81" lengthAdjust="spacingAndGlyphs">S01</text>
<rect x="240" y="284" width="39" height="66" fill="#fff" stroke="none" stroke-width="1"/>
<rect x="240" y="284" width="39" height="18" fill="#C8C8C8" stroke="none" stroke-width="1"/>
<rect x="240" y="284" width="39" height="1" fill="#000"/>
<rect x="240" y="302" width="39" height="1" fill="#000"/>
<rect x="240" y="334" width="39" height="1" fill="#000"/>
<rect x="240" y="349" width="39" height="1" fill="#000"/>
<rect x="240" y="284" width="1" height="66" fill="#000"/>
<rect x="278" y="284" width="1" height="66" fill="#000"/>
<text x="248.0" y="298" font-size="12" font-weight="bold" fill="#000" textLength="22.7" lengthAdjust="spacingAndGlyphs">BTN</text>
<text x="246.5" y="313" font-size="10" fill="#000" textLength="28.5" lengthAdjust="spacingAndGlyphs">Output</text>
<text x="253.9" y="329" font-size="10" fill="#000" textLength="21.1" lengthAdjust="spacingAndGlyphs">Input</text>
<clipPath id="clipF240_284"><rect x="241" y="335" width="37" height="14"/></clipPath>
<g clip-path="url(#clipF240_284)">
<text x="241" y="346" font-size="10" fill="#000">S01_Start</text>
</g>
<rect x="436" y="340" width="62" height="66" fill="#fff" stroke="none" stroke-width="1"/>
<rect x="436" y="340" width="62" height="18" fill="#C8C8C8" stroke="none" stroke-width="1"/>
<rect x="436" y="340" width="62" height="1" fill="#000"/>
<rect x="436" y="358" width="62" height="1" fill="#000"/>
<rect x="436" y="390" width="62" height="1" fill="#000"/>
<rect x="436" y="405" width="62" height="1" fill="#000"/>
<rect x="436" y="340" width="1" height="66" fill="#000"/>
<rect x="497" y="340" width="1" height="66" fill="#000"/>
<text x="453.0" y="354" font-size="12" font-weight="bold" fill="#000" textLength="27.67" lengthAdjust="spacingAndGlyphs">TRIG</text>
<text x="439" y="369" font-size="10" fill="#000" textLength="14.3" lengthAdjust="spacingAndGlyphs">Set</text>
<text x="439" y="385" font-size="10" fill="#000" textLength="24.8" lengthAdjust="spacingAndGlyphs">Reset</text>
<text x="465.5" y="369" font-size="10" fill="#000" textLength="28.5" lengthAdjust="spacingAndGlyphs">Output</text>
<text x="447.0" y="402" font-size="10" fill="#000" textLength="37.24" lengthAdjust="spacingAndGlyphs">S01_off</text>
<rect x="244" y="368" width="39" height="66" fill="#fff" stroke="none" stroke-width="1"/>
<rect x="244" y="368" width="39" height="18" fill="#C8C8C8" stroke="none" stroke-width="1"/>
<rect x="244" y="368" width="39" height="1" fill="#000"/>
<rect x="244" y="386" width="39" height="1" fill="#000"/>
<rect x="244" y="418" width="39" height="1" fill="#000"/>
<rect x="244" y="433" width="39" height="1" fill="#000"/>
<rect x="244" y="368" width="1" height="66" fill="#000"/>
<rect x="282" y="368" width="1" height="66" fill="#000"/>
<text x="252.0" y="382" font-size="12" font-weight="bold" fill="#000" textLength="22.7" lengthAdjust="spacingAndGlyphs">BTN</text>
<text x="250.5" y="397" font-size="10" fill="#000" textLength="28.5" lengthAdjust="spacingAndGlyphs">Output</text>
<text x="257.9" y="413" font-size="10" fill="#000" textLength="21.1" lengthAdjust="spacingAndGlyphs">Input</text>
<clipPath id="clipF244_368"><rect x="245" y="419" width="37" height="14"/></clipPath>
<g clip-path="url(#clipF244_368)">
<text x="245" y="430" font-size="10" fill="#000">S01_Stop</text>
</g>
<rect x="328" y="420" width="74" height="98" fill="#fff" stroke="none" stroke-width="1"/>
<rect x="328" y="420" width="74" height="18" fill="#C8C8C8" stroke="none" stroke-width="1"/>
<rect x="328" y="420" width="74" height="1" fill="#000"/>
<rect x="328" y="438" width="74" height="1" fill="#000"/>
<rect x="328" y="502" width="74" height="1" fill="#000"/>
<rect x="328" y="517" width="74" height="1" fill="#000"/>
<rect x="328" y="420" width="1" height="98" fill="#000"/>
<rect x="401" y="420" width="1" height="98" fill="#000"/>
<text x="356.0" y="434" font-size="12" font-weight="bold" fill="#000" textLength="17.0" lengthAdjust="spacingAndGlyphs">OR</text>
<text x="331" y="449" font-size="10" fill="#000" textLength="34.3" lengthAdjust="spacingAndGlyphs">Input 00</text>
<text x="331" y="465" font-size="10" fill="#000" textLength="34.3" lengthAdjust="spacingAndGlyphs">Input 01</text>
<text x="331" y="481" font-size="10" fill="#000" textLength="34.3" lengthAdjust="spacingAndGlyphs">Input 02</text>
<text x="331" y="497" font-size="10" fill="#000" textLength="34.3" lengthAdjust="spacingAndGlyphs">Input 03</text>
<text x="369.5" y="449" font-size="10" fill="#000" textLength="28.5" lengthAdjust="spacingAndGlyphs">Output</text>
<text x="342.0" y="514" font-size="10" fill="#000" textLength="44.23" lengthAdjust="spacingAndGlyphs">S01_stop</text>
<rect x="580" y="176" width="161" height="13" fill="#C3F5D3" stroke="none" stroke-width="1"/>
<rect x="580" y="176" width="161" height="1" fill="#A8A494"/>
<rect x="580" y="188" width="161" height="1" fill="#A8A494"/>
<rect x="580" y="176" width="1" height="13" fill="#A8A494"/>
<rect x="740" y="176" width="1" height="13" fill="#A8A494"/>
<text x="582.0" y="186" font-size="10" fill="#000" textLength="156.21" lengthAdjust="spacingAndGlyphs">(8) AND.S01_DvuAlarm1.Input 03;...</text>
<rect x="608" y="220" width="110" height="13" fill="#FFFF99" stroke="none" stroke-width="1"/>
<rect x="608" y="220" width="110" height="1" fill="#A8A494"/>
<rect x="608" y="232" width="110" height="1" fill="#A8A494"/>
<rect x="608" y="220" width="1" height="13" fill="#A8A494"/>
<rect x="717" y="220" width="1" height="13" fill="#A8A494"/>
<text x="610.0" y="230" font-size="10" fill="#000" textLength="105.53" lengthAdjust="spacingAndGlyphs">AND.S01_ZdvOk.Output</text>
<rect x="606" y="236" width="112" height="13" fill="#FFFF99" stroke="none" stroke-width="1"/>
<rect x="606" y="236" width="112" height="1" fill="#A8A494"/>
<rect x="606" y="248" width="112" height="1" fill="#A8A494"/>
<rect x="606" y="236" width="1" height="13" fill="#A8A494"/>
<rect x="717" y="236" width="1" height="13" fill="#A8A494"/>
<text x="608.0" y="246" font-size="10" fill="#000" textLength="107.64" lengthAdjust="spacingAndGlyphs">AND.S01_DvuOk.Output</text>
<rect x="289" y="320" width="85" height="13" fill="#C3F5D3" stroke="none" stroke-width="1"/>
<rect x="289" y="320" width="85" height="1" fill="#A8A494"/>
<rect x="289" y="332" width="85" height="1" fill="#A8A494"/>
<rect x="289" y="320" width="1" height="13" fill="#A8A494"/>
<rect x="373" y="320" width="1" height="13" fill="#A8A494"/>
<text x="291.0" y="330" font-size="10" fill="#000" textLength="80.66" lengthAdjust="spacingAndGlyphs">OR.Beep1.Input 00</text>
<rect x="969" y="340" width="37" height="13" fill="#C3F5D3" stroke="none" stroke-width="1"/>
<rect x="969" y="340" width="37" height="1" fill="#A8A494"/>
<rect x="969" y="352" width="37" height="1" fill="#A8A494"/>
<rect x="969" y="340" width="1" height="13" fill="#A8A494"/>
<rect x="1005" y="340" width="1" height="13" fill="#A8A494"/>
<text x="970.0" y="350" font-size="10" fill="#000" textLength="28.46" lengthAdjust="spacingAndGlyphs">MCHB</text>
<rect x="969" y="356" width="37" height="13" fill="#C3F5D3" stroke="none" stroke-width="1"/>
<rect x="969" y="356" width="37" height="1" fill="#A8A494"/>
<rect x="969" y="368" width="37" height="1" fill="#A8A494"/>
<rect x="969" y="356" width="1" height="13" fill="#A8A494"/>
<rect x="1005" y="356" width="1" height="13" fill="#A8A494"/>
<text x="970.0" y="366" font-size="10" fill="#000" textLength="28.46" lengthAdjust="spacingAndGlyphs">MCHB</text>
<rect x="969" y="372" width="37" height="13" fill="#C3F5D3" stroke="none" stroke-width="1"/>
<rect x="969" y="372" width="37" height="1" fill="#A8A494"/>
<rect x="969" y="384" width="37" height="1" fill="#A8A494"/>
<rect x="969" y="372" width="1" height="13" fill="#A8A494"/>
<rect x="1005" y="372" width="1" height="13" fill="#A8A494"/>
<text x="970.0" y="382" font-size="10" fill="#000" textLength="28.46" lengthAdjust="spacingAndGlyphs">MCHB</text>
<rect x="969" y="388" width="37" height="13" fill="#C3F5D3" stroke="none" stroke-width="1"/>
<rect x="969" y="388" width="37" height="1" fill="#A8A494"/>
<rect x="969" y="400" width="37" height="1" fill="#A8A494"/>
<rect x="969" y="388" width="1" height="13" fill="#A8A494"/>
<rect x="1005" y="388" width="1" height="13" fill="#A8A494"/>
<text x="970.0" y="398" font-size="10" fill="#000" textLength="28.46" lengthAdjust="spacingAndGlyphs">MCHB</text>
<rect x="969" y="404" width="37" height="13" fill="#C3F5D3" stroke="none" stroke-width="1"/>
<rect x="969" y="404" width="37" height="1" fill="#A8A494"/>
<rect x="969" y="416" width="37" height="1" fill="#A8A494"/>
<rect x="969" y="404" width="1" height="13" fill="#A8A494"/>
<rect x="1005" y="404" width="1" height="13" fill="#A8A494"/>
<text x="970.0" y="414" font-size="10" fill="#000" textLength="28.46" lengthAdjust="spacingAndGlyphs">MCHB</text>
<rect x="969" y="420" width="37" height="13" fill="#C3F5D3" stroke="none" stroke-width="1"/>
<rect x="969" y="420" width="37" height="1" fill="#A8A494"/>
<rect x="969" y="432" width="37" height="1" fill="#A8A494"/>
<rect x="969" y="420" width="1" height="13" fill="#A8A494"/>
<rect x="1005" y="420" width="1" height="13" fill="#A8A494"/>
<text x="970.0" y="430" font-size="10" fill="#000" textLength="28.46" lengthAdjust="spacingAndGlyphs">MCHB</text>
<rect x="969" y="436" width="37" height="13" fill="#C3F5D3" stroke="none" stroke-width="1"/>
<rect x="969" y="436" width="37" height="1" fill="#A8A494"/>
<rect x="969" y="448" width="37" height="1" fill="#A8A494"/>
<rect x="969" y="436" width="1" height="13" fill="#A8A494"/>
<rect x="1005" y="436" width="1" height="13" fill="#A8A494"/>
<text x="970.0" y="446" font-size="10" fill="#000" textLength="28.46" lengthAdjust="spacingAndGlyphs">MCHB</text>
</g>
</svg>
</body></html>
